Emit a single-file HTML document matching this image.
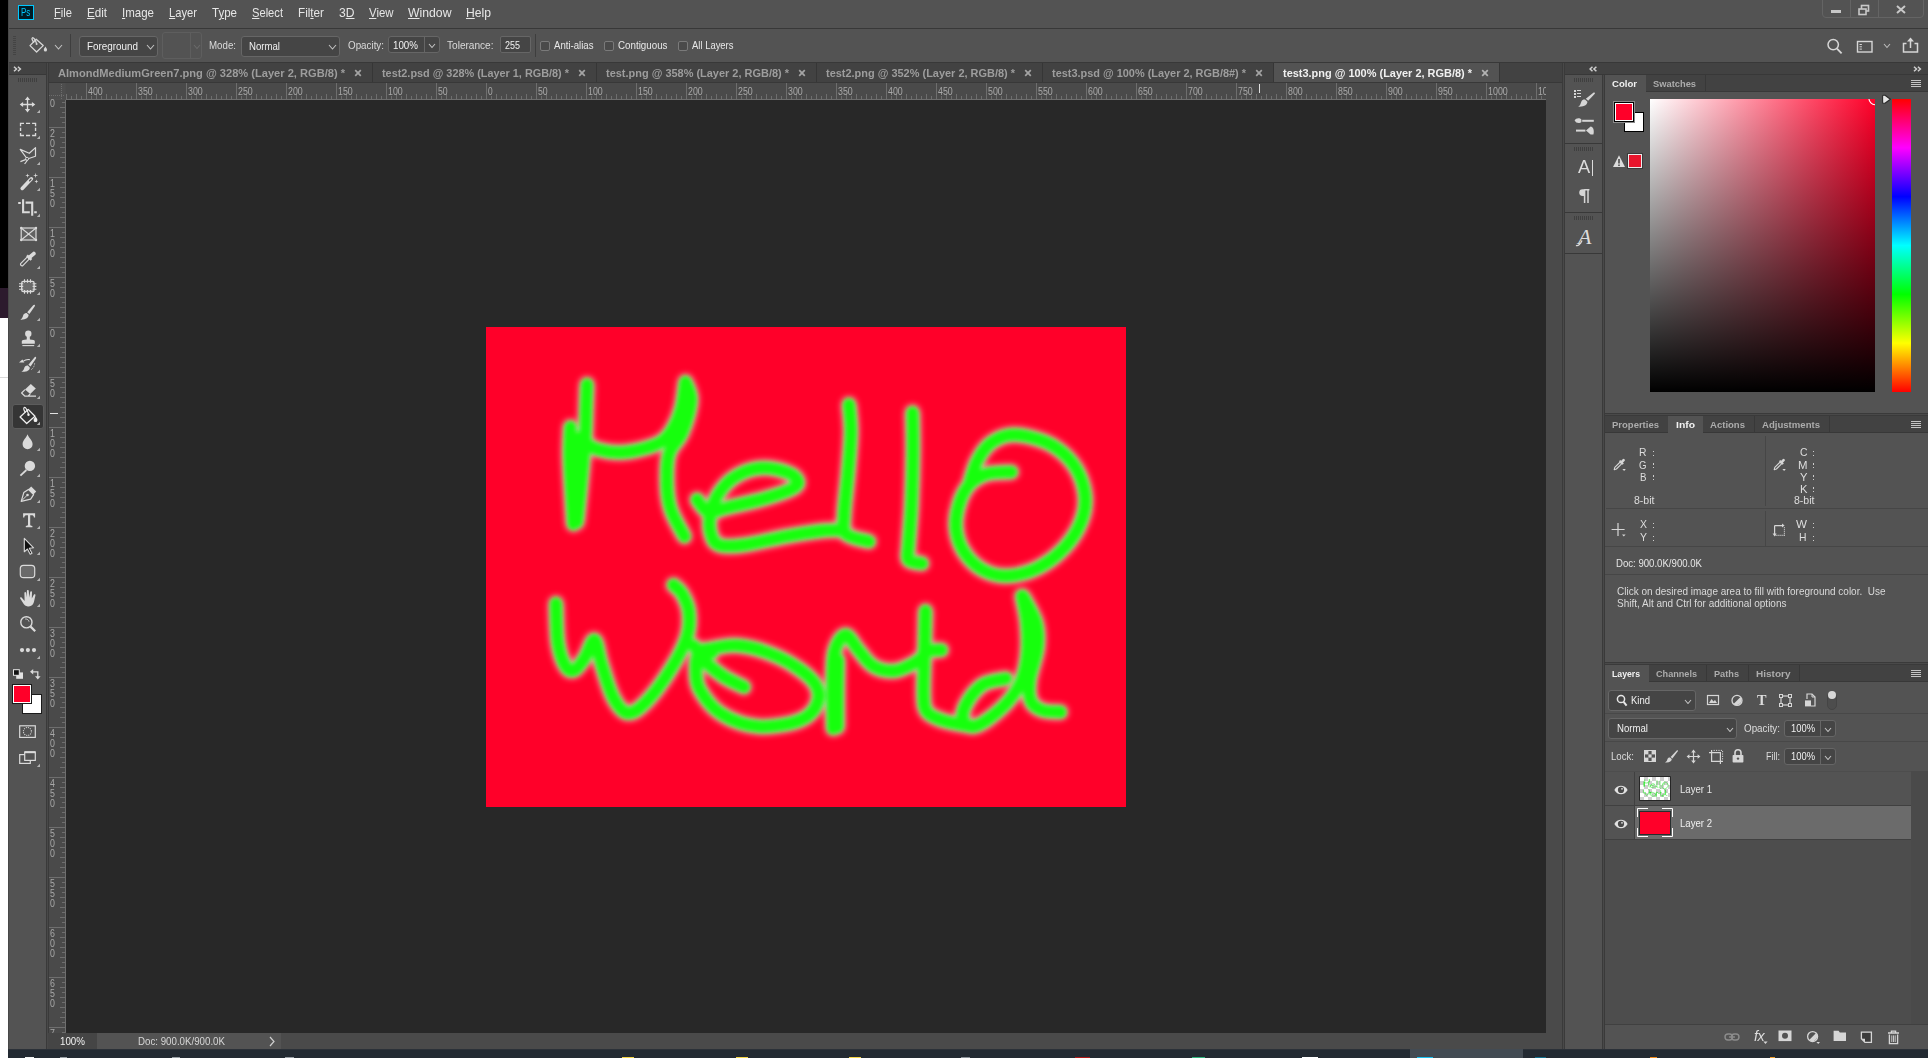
<!DOCTYPE html>
<html><head><meta charset="utf-8"><title>Photoshop</title><style>
html,body{margin:0;padding:0;background:#535353;}
body{width:1928px;height:1058px;position:relative;overflow:hidden;font-family:"Liberation Sans",sans-serif;}
#root{position:absolute;left:0;top:0;width:1928px;height:1058px;overflow:hidden;}
#root div,#root svg,#root span.t{position:absolute;}
span.t{white-space:pre;line-height:1;transform-origin:0 50%;}
u{text-decoration:underline;text-underline-offset:1px;text-decoration-thickness:1px;}
</style></head><body><div id="root">
<div style="left:0px;top:0px;width:8px;height:288px;background:#000000;"></div>
<div style="left:0px;top:288px;width:8px;height:30px;background:#2c1a2d;"></div>
<div style="left:0px;top:318px;width:8px;height:740px;background:#ffffff;"></div>
<div style="left:0px;top:377px;width:8px;height:1px;background:#d9d9d9;"></div>
<div style="left:8px;top:0px;width:1920px;height:1049px;background:#535353;"></div>
<div style="left:8px;top:28px;width:1920px;height:1px;background:#383838;"></div>
<div style="left:8px;top:62px;width:1920px;height:1px;background:#383838;"></div>
<div style="left:8px;top:63px;width:38px;height:11px;background:#424242;"></div>
<div style="left:8px;top:74px;width:38px;height:1px;background:#383838;"></div>
<div style="left:48px;top:63px;width:1514px;height:19px;background:#424242;"></div>
<div style="left:48px;top:82px;width:1514px;height:1px;background:#383838;"></div>
<div style="left:48px;top:83px;width:1498px;height:16px;background:#4a4a4a;"></div>
<div style="left:48px;top:100px;width:17px;height:933px;background:#4a4a4a;"></div>
<div style="left:66px;top:100px;width:1480px;height:933px;background:#282828;"></div>
<div style="left:1546px;top:83px;width:16px;height:966px;background:#4a4a4a;"></div>
<div style="left:48px;top:1033px;width:1514px;height:16px;background:#4a4a4a;"></div>
<div style="left:46px;top:63px;width:3px;height:986px;background:#494949;"></div>
<div style="left:46px;top:63px;width:1px;height:986px;background:#3a3a3a;"></div>
<div style="left:48px;top:63px;width:1px;height:986px;background:#3a3a3a;"></div>
<div style="left:8px;top:0px;width:1px;height:1049px;background:#474747;"></div>
<div style="left:1562px;top:63px;width:3px;height:986px;background:#494949;"></div>
<div style="left:1562px;top:63px;width:1px;height:986px;background:#3a3a3a;"></div>
<div style="left:1564px;top:63px;width:1px;height:986px;background:#3a3a3a;"></div>
<div style="left:1565px;top:63px;width:363px;height:11px;background:#424242;"></div>
<div style="left:1565px;top:74px;width:363px;height:1px;background:#383838;"></div>
<div style="left:1602px;top:75px;width:3px;height:974px;background:#494949;"></div>
<div style="left:1602px;top:75px;width:1px;height:974px;background:#3a3a3a;"></div>
<div style="left:1604px;top:75px;width:1px;height:974px;background:#3a3a3a;"></div>
<div style="left:8px;top:1049px;width:1920px;height:9px;background:#232a32;"></div>
<div style="left:8px;top:1049px;width:1920px;height:1px;background:#2b3138;"></div>
<div style="left:1410px;top:1049px;width:113px;height:9px;background:#434b53;"></div>
<div style="left:25px;top:1057px;width:9px;height:1px;background:#f4f4f4;"></div>
<div style="left:60px;top:1057px;width:7px;height:1px;background:#9aa0a6;"></div>
<div style="left:172px;top:1057px;width:8px;height:1px;background:#9aa0a6;"></div>
<div style="left:285px;top:1057px;width:9px;height:1px;background:#9aa0a6;"></div>
<div style="left:622px;top:1057px;width:12px;height:1px;background:#f5d547;"></div>
<div style="left:736px;top:1057px;width:12px;height:1px;background:#f5d547;"></div>
<div style="left:849px;top:1057px;width:12px;height:1px;background:#f5d547;"></div>
<div style="left:961px;top:1057px;width:9px;height:1px;background:#8a9098;"></div>
<div style="left:1075px;top:1057px;width:15px;height:1px;background:#b01818;"></div>
<div style="left:1192px;top:1057px;width:13px;height:1px;background:#2fb37c;"></div>
<div style="left:1302px;top:1057px;width:16px;height:1px;background:#ffffff;"></div>
<div style="left:1417px;top:1057px;width:16px;height:1px;background:#19c2f2;"></div>
<div style="left:1535px;top:1057px;width:11px;height:1px;background:#126e8c;"></div>
<div style="left:1650px;top:1057px;width:7px;height:1px;background:#f08a1c;"></div>
<div style="left:1770px;top:1057px;width:5px;height:1px;background:#f0a030;"></div>
<div style="left:18px;top:5px;width:16px;height:15px;background:#001c26;border:1px solid #00c8ff;box-sizing:border-box;"></div>
<span class="t" style="left:21.30px;top:7.27px;font-size:11px;color:#00c8ff;transform:scaleX(0.7319);">Ps</span>
<span class="t" style="left:54.00px;top:6.37px;font-size:13px;color:#e6e6e6;transform:scaleX(0.8584);"><u>F</u>ile</span>
<span class="t" style="left:87.00px;top:6.37px;font-size:13px;color:#e6e6e6;transform:scaleX(0.8926);"><u>E</u>dit</span>
<span class="t" style="left:122.00px;top:6.37px;font-size:13px;color:#e6e6e6;transform:scaleX(0.8850);"><u>I</u>mage</span>
<span class="t" style="left:169.00px;top:6.37px;font-size:13px;color:#e6e6e6;transform:scaleX(0.8607);"><u>L</u>ayer</span>
<span class="t" style="left:212.00px;top:6.37px;font-size:13px;color:#e6e6e6;transform:scaleX(0.8864);">T<u>y</u>pe</span>
<span class="t" style="left:252.00px;top:6.37px;font-size:13px;color:#e6e6e6;transform:scaleX(0.8578);"><u>S</u>elect</span>
<span class="t" style="left:298.00px;top:6.37px;font-size:13px;color:#e6e6e6;transform:scaleX(0.8995);">Fil<u>t</u>er</span>
<span class="t" style="left:339.00px;top:6.37px;font-size:13px;color:#e6e6e6;transform:scaleX(0.9323);">3<u>D</u></span>
<span class="t" style="left:369.00px;top:6.37px;font-size:13px;color:#e6e6e6;transform:scaleX(0.8765);"><u>V</u>iew</span>
<span class="t" style="left:408.00px;top:6.37px;font-size:13px;color:#e6e6e6;transform:scaleX(0.9405);"><u>W</u>indow</span>
<span class="t" style="left:466.00px;top:6.37px;font-size:13px;color:#e6e6e6;transform:scaleX(0.9346);"><u>H</u>elp</span>
<div style="left:1822px;top:-2px;width:102px;height:20px;background:transparent;border:1px solid #646464;border-radius:0 0 4px 4px;box-sizing:border-box;"></div>
<div style="left:1850px;top:0px;width:1px;height:18px;background:#646464;"></div>
<div style="left:1878px;top:0px;width:1px;height:18px;background:#646464;"></div>
<div style="left:1831px;top:10px;width:10px;height:3px;background:#c8c8c8;"></div>
<svg style="left:1858px;top:4px;" width="12" height="12" viewBox="0 0 12 12"><rect x="3.5" y="1.5" width="7" height="5.5" fill="none" stroke="#c8c8c8" stroke-width="1.6"/><rect x="1" y="5" width="7" height="5.5" fill="#535353" stroke="#c8c8c8" stroke-width="1.6"/></svg>
<svg style="left:1895px;top:4px;" width="12" height="12" viewBox="0 0 12 12"><path d="M2 2 L10 9 M10 2 L2 9" stroke="#c8c8c8" stroke-width="2" fill="none"/></svg>
<div style="left:13px;top:36px;width:3px;height:1px;background:#444444;"></div>
<div style="left:13px;top:38px;width:3px;height:1px;background:#444444;"></div>
<div style="left:13px;top:40px;width:3px;height:1px;background:#444444;"></div>
<div style="left:13px;top:42px;width:3px;height:1px;background:#444444;"></div>
<div style="left:13px;top:44px;width:3px;height:1px;background:#444444;"></div>
<div style="left:13px;top:46px;width:3px;height:1px;background:#444444;"></div>
<div style="left:13px;top:48px;width:3px;height:1px;background:#444444;"></div>
<div style="left:13px;top:50px;width:3px;height:1px;background:#444444;"></div>
<div style="left:13px;top:52px;width:3px;height:1px;background:#444444;"></div>
<div style="left:13px;top:54px;width:3px;height:1px;background:#444444;"></div>
<svg style="left:28px;top:36px;" width="20" height="18" viewBox="0 0 20 18"><g fill="none" stroke="#d6d6d6" stroke-width="1.3" stroke-linejoin="round"><path d="M8.2 3.2 L15.2 9.6 L8.6 16 L2 9.6 Z"/><path d="M8.6 7.6 C7.2 3.8 5.6 1.4 4.4 1.8 C3.4 2.2 4.2 4.2 6 6.6"/></g><circle cx="8.6" cy="8" r="1" fill="#d6d6d6"/><path d="M17.4 10.6 C18.6 12.4 19 13.2 19 14 A1.6 1.6 0 0 1 15.8 14 C15.8 13.2 16.2 12.4 17.4 10.6 Z" fill="#d6d6d6"/></svg>
<svg style="left:54.0px;top:43.8px;" width="9" height="6" viewBox="0 0 9 6"><path d="M1 1 L4.5 5 L8 1" fill="none" stroke="#c4c4c4" stroke-width="1.05"/></svg>
<div style="left:70px;top:34px;width:1px;height:23px;background:#3e3e3e;"></div>
<div style="left:79px;top:36px;width:78.5px;height:21px;background:#454545;border:1px solid #666;border-radius:3px;box-sizing:border-box;"></div>
<span class="t" style="left:87.00px;top:41.12px;font-size:10.5px;color:#f0f0f0;transform:scaleX(0.9393);">Foreground</span>
<svg style="left:145.5px;top:44.4px;" width="9" height="6" viewBox="0 0 9 6"><path d="M1 1 L4.5 5 L8 1" fill="none" stroke="#c4c4c4" stroke-width="1.05"/></svg>
<div style="left:162px;top:32px;width:40px;height:27px;background:#535353;border:1px solid #5e5e5e;border-radius:3px;box-sizing:border-box;"></div>
<div style="left:190px;top:33px;width:1px;height:25px;background:#5e5e5e;"></div>
<svg style="left:192.5px;top:43.75px;" width="8" height="5.5" viewBox="0 0 8 5.5"><path d="M1 1 L4.0 4.5 L7 1" fill="none" stroke="#6a6a6a" stroke-width="1.05"/></svg>
<span class="t" style="left:209.00px;top:40.32px;font-size:10.5px;color:#dadada;transform:scaleX(0.9251);">Mode:</span>
<div style="left:240.5px;top:36px;width:99px;height:21px;background:#454545;border:1px solid #666;border-radius:3px;box-sizing:border-box;"></div>
<span class="t" style="left:249.00px;top:41.12px;font-size:10.5px;color:#f0f0f0;transform:scaleX(0.9160);">Normal</span>
<svg style="left:327.5px;top:44.4px;" width="9" height="6" viewBox="0 0 9 6"><path d="M1 1 L4.5 5 L8 1" fill="none" stroke="#c4c4c4" stroke-width="1.05"/></svg>
<span class="t" style="left:348.00px;top:40.12px;font-size:10.5px;color:#dadada;transform:scaleX(0.9347);">Opacity:</span>
<div style="left:388px;top:36px;width:52px;height:17px;background:#454545;border:1px solid #666;border-radius:3px;box-sizing:border-box;"></div>
<div style="left:424px;top:37px;width:1px;height:15px;background:#666;"></div>
<span class="t" style="left:393.00px;top:40.12px;font-size:10.5px;color:#f0f0f0;transform:scaleX(0.9308);">100%</span>
<svg style="left:428.0px;top:43.05px;" width="8" height="5.5" viewBox="0 0 8 5.5"><path d="M1 1 L4.0 4.5 L7 1" fill="none" stroke="#c4c4c4" stroke-width="1.05"/></svg>
<span class="t" style="left:447.00px;top:40.12px;font-size:10.5px;color:#dadada;transform:scaleX(0.9597);">Tolerance:</span>
<div style="left:500px;top:36px;width:31px;height:17px;background:#454545;border:1px solid #666;border-radius:2px;box-sizing:border-box;"></div>
<span class="t" style="left:505.00px;top:40.12px;font-size:10.5px;color:#f0f0f0;transform:scaleX(0.8556);">255</span>
<div style="left:535px;top:34px;width:1px;height:23px;background:#3e3e3e;"></div>
<div style="left:539.5px;top:40.5px;width:10px;height:10px;background:#4a4a4a;border:1px solid #7a7a7a;border-radius:2px;box-sizing:border-box;"></div>
<span class="t" style="left:554.00px;top:40.32px;font-size:10.5px;color:#e8e8e8;transform:scaleX(0.9146);">Anti-alias</span>
<div style="left:603.5px;top:40.5px;width:10px;height:10px;background:#4a4a4a;border:1px solid #7a7a7a;border-radius:2px;box-sizing:border-box;"></div>
<span class="t" style="left:618.00px;top:40.32px;font-size:10.5px;color:#e8e8e8;transform:scaleX(0.9318);">Contiguous</span>
<div style="left:677.5px;top:40.5px;width:10px;height:10px;background:#4a4a4a;border:1px solid #7a7a7a;border-radius:2px;box-sizing:border-box;"></div>
<span class="t" style="left:692.00px;top:40.32px;font-size:10.5px;color:#e8e8e8;transform:scaleX(0.9000);">All Layers</span>
<svg style="left:1826px;top:37px;" width="18" height="18" viewBox="0 0 18 18"><circle cx="7.2" cy="7.6" r="5.2" fill="none" stroke="#d6d6d6" stroke-width="1.5"/><path d="M11 11.6 L15.6 16.4" stroke="#d6d6d6" stroke-width="1.8"/></svg>
<svg style="left:1856px;top:40px;" width="18" height="14" viewBox="0 0 18 14"><rect x="1.5" y="1.5" width="14.5" height="10.5" fill="none" stroke="#d6d6d6" stroke-width="1.4"/><path d="M3.5 4.5h2.4M3.5 6.8h2.4M3.5 9.1h2.4" stroke="#d6d6d6" stroke-width="1"/></svg>
<svg style="left:1882.5px;top:43.25px;" width="8" height="5.5" viewBox="0 0 8 5.5"><path d="M1 1 L4.0 4.5 L7 1" fill="none" stroke="#bdbdbd" stroke-width="1.05"/></svg>
<svg style="left:1901px;top:36px;" width="20" height="18" viewBox="0 0 20 18"><path d="M5.5 7.5 H2.5 V16 H16.5 V7.5 H13.5" fill="none" stroke="#d6d6d6" stroke-width="1.5"/><path d="M9.5 12 V3" stroke="#d6d6d6" stroke-width="1.5"/><path d="M6 5.6 L9.5 1.6 L13 5.6 Z" fill="#d6d6d6"/></svg>
<svg style="left:13px;top:65.5px;" width="10" height="6" viewBox="0 0 10 6"><path d="M1 0.7 L3.5 3 L1 5.3 M4.9 0.7 L7.4 3 L4.9 5.3" fill="none" stroke="#d0d0d0" stroke-width="1.5"/></svg>
<div style="left:18px;top:78px;width:1px;height:4px;background:#3f3f3f;"></div>
<div style="left:20px;top:78px;width:1px;height:4px;background:#3f3f3f;"></div>
<div style="left:22px;top:78px;width:1px;height:4px;background:#3f3f3f;"></div>
<div style="left:24px;top:78px;width:1px;height:4px;background:#3f3f3f;"></div>
<div style="left:26px;top:78px;width:1px;height:4px;background:#3f3f3f;"></div>
<div style="left:28px;top:78px;width:1px;height:4px;background:#3f3f3f;"></div>
<div style="left:30px;top:78px;width:1px;height:4px;background:#3f3f3f;"></div>
<div style="left:32px;top:78px;width:1px;height:4px;background:#3f3f3f;"></div>
<div style="left:34px;top:78px;width:1px;height:4px;background:#3f3f3f;"></div>
<div style="left:36px;top:78px;width:1px;height:4px;background:#3f3f3f;"></div>
<div style="left:11.5px;top:403.5px;width:32px;height:25px;background:#353535;border:1px solid #5c5c5c;border-radius:3px;box-sizing:border-box;"></div>
<svg style="left:8px;top:75px" width="38" height="705" viewBox="8 75 38 705"><path d="M27.5 98.6 V110.4 M21.6 104.5 H33.4" stroke="#dadada" stroke-width="1.35" fill="none"/><path d="M27.5 96.6 L30.1 100 H24.9 Z M27.5 112.4 L30.1 109 H24.9 Z M19.7 104.5 L23.1 101.9 V107.1 Z M35.3 104.5 L31.9 101.9 V107.1 Z" fill="#dadada"/><path d="M40 109.8 V113 H36.8 Z" fill="#b4b4b4"/><path d="M20.55 126.2 V123.35 H24 M26 123.35 H30.1 M32.1 123.35 H35.55 V126.2 M35.55 127.7 V131 M35.55 132.9 V135.45 H32.1 M30.1 135.45 H26 M24 135.45 H20.55 V132.9 M20.55 131 V127.7" fill="none" stroke="#dadada" stroke-width="1.35"/><path d="M40 135.8 V139 H36.8 Z" fill="#b4b4b4"/><path d="M20.2 149.4 L29.3 153.3 L35.5 147.6 V156.2 L27.3 159 Z" fill="none" stroke="#dadada" stroke-width="1.2" stroke-linejoin="round"/><path d="M26.2 159.4 L20.4 161.6 M27.6 160 L24.6 164" stroke="#dadada" stroke-width="1.2" fill="none"/><circle cx="27.1" cy="158.8" r="1.5" fill="#535353" stroke="#dadada" stroke-width="1"/><path d="M40 161.8 V165 H36.8 Z" fill="#b4b4b4"/><path d="M22.2 188.4 L31.4 178.8" stroke="#dadada" stroke-width="3.6" stroke-linecap="round"/><path d="M29.6 180.8 L31 179.3" stroke="#535353" stroke-width="1.3" stroke-linecap="round"/><path d="M27.5 173.4 L28.0 175.1 L29.7 175.6 L28.0 176.1 L27.5 177.79999999999998 L27.0 176.1 L25.3 175.6 L27.0 175.1 Z" fill="#dadada"/><path d="M35.6 172.8 L36.1 174.9 L38.2 175.4 L36.1 175.9 L35.6 178.0 L35.1 175.9 L33.0 175.4 L35.1 174.9 Z" fill="#dadada"/><path d="M36.4 179.6 L36.9 181.1 L38.4 181.6 L36.9 182.1 L36.4 183.6 L35.9 182.1 L34.4 181.6 L35.9 181.1 Z" fill="#dadada"/><path d="M40 187.8 V191 H36.8 Z" fill="#b4b4b4"/><path d="M23.1 199.2 V212.2 H29.8 M25.6 202.6 H32.2 V215.8 M18.2 203 H20.8 M34.2 212.2 H36.8" stroke="#dadada" stroke-width="2.1" fill="none"/><path d="M40 213.8 V217 H36.8 Z" fill="#b4b4b4"/><rect x="21.2" y="228" width="14.8" height="12" fill="#626262" stroke="#dadada" stroke-width="1.2"/><path d="M21.2 228 L36 240 M36 228 L21.2 240" stroke="#dadada" stroke-width="1.1"/><circle cx="21.2" cy="228" r="1.2" fill="#dadada"/><circle cx="36" cy="228" r="1.2" fill="#dadada"/><circle cx="21.2" cy="240" r="1.2" fill="#dadada"/><circle cx="36" cy="240" r="1.2" fill="#dadada"/><path d="M29.6 258.6 L22.6 265.8 A1.7 1.7 0 0 1 20.6 263.6 L27.6 256.6" fill="none" stroke="#dadada" stroke-width="1.2" stroke-linejoin="round"/><path d="M27 255.4 L31.4 259.8" stroke="#dadada" stroke-width="2.4"/><path d="M29.4 257.4 L33.8 253.6" stroke="#dadada" stroke-width="3.8" stroke-linecap="round"/><path d="M40 265.8 V269 H36.8 Z" fill="#b4b4b4"/><rect x="21.7" y="281.3" width="12.4" height="10.2" rx="1.6" fill="#6a6a6a" stroke="#dadada" stroke-width="1.3"/><path d="M24.5 279.2 V282.8 M27.5 279.2 V282.8 M30.5 279.2 V282.8 M24.5 290 V293.8 M27.5 290 V293.8 M30.5 290 V293.8 M19 283.8 H23.2 M19 286.4 H23.2 M19 289.2 H23.2 M32.6 283.8 H36.4 M32.6 286.4 H36.4 M32.6 289.2 H36.4" stroke="#dadada" stroke-width="1.1"/><path d="M40 291.8 V295 H36.8 Z" fill="#b4b4b4"/><path d="M34.6 304.8 C35.2 305.4 35 306 34.6 306.6 L29.4 314 L27.2 312.2 L33.2 305.2 C33.6 304.8 34.2 304.4 34.6 304.8 Z" fill="#dadada"/><path d="M26.6 313 L28.6 314.8 C28.8 317.6 25.6 320 20.2 319.6 C22.6 318.4 22.6 316.8 23.2 315.2 C23.8 313.6 25.4 312.6 26.6 313 Z" fill="#dadada"/><path d="M40 317.8 V321 H36.8 Z" fill="#b4b4b4"/><circle cx="28.3" cy="333.7" r="3.2" fill="#dadada"/><path d="M26.9 335.6 H29.7 L29.9 339.4 C33 339.6 34.8 340 34.8 341 V343.8 H21.8 V341 C21.8 340 23.6 339.6 26.7 339.4 Z" fill="#dadada"/><path d="M22.4 345.6 H34.2" stroke="#dadada" stroke-width="1.1"/><path d="M40 343.8 V347 H36.8 Z" fill="#b4b4b4"/><path d="M35.8 357 C36.4 357.6 36.2 358.2 35.8 358.8 L30.6 366.6 L28.4 364.8 L34.4 357.4 C34.8 357 35.4 356.6 35.8 357 Z" fill="#dadada"/><path d="M27.8 365.6 L29.8 367.4 C30 370 27 372.2 21.4 371.8 C23.8 370.6 23.8 369.2 24.4 367.6 C25 366.2 26.6 365.2 27.8 365.6 Z" fill="#dadada"/><path d="M29.8 359.6 C27 359.2 25 359.8 23.4 361.2" fill="none" stroke="#dadada" stroke-width="1.1"/><path d="M19 362.6 L22.4 359.4 L24.4 362.6 Z" fill="#dadada"/><path d="M34.6 363.4 C34.4 366.4 33 368.6 31 369.8" fill="none" stroke="#dadada" stroke-width="1" stroke-dasharray="1 1.3"/><path d="M40 369.8 V373 H36.8 Z" fill="#b4b4b4"/><path d="M30.8 384 L35.8 388.4 L30.2 394 L25 389.6 Z" fill="#dadada"/><path d="M25 389.6 L21.6 393 L25 396.2 H28 L30.2 394 M28 396.2 H36" fill="none" stroke="#dadada" stroke-width="1.2" stroke-linejoin="round"/><path d="M40 395.8 V399 H36.8 Z" fill="#b4b4b4"/><path d="M28.2 409.4 L35 416.2 L26.7 423.5 L20.1 417 Z" fill="none" stroke="#f0f0f0" stroke-width="1.3" stroke-linejoin="round"/><path d="M28.5 414.4 C27.6 410.6 25.6 406.8 24.2 407.6 C23.2 408.2 24 410.6 25.4 412.4" fill="none" stroke="#f0f0f0" stroke-width="1.2"/><circle cx="28.5" cy="414.7" r="1.2" fill="#f0f0f0"/><path d="M35.6 416.6 C36.8 418.4 37.4 419.2 37.4 420.2 A1.9 1.9 0 0 1 33.6 420.2 C33.6 419.2 34.4 418.4 35.6 416.6 Z" fill="#f0f0f0"/><path d="M40 421.8 V425 H36.8 Z" fill="#b4b4b4"/><path d="M27.5 434.2 C28.6 437.6 32.6 440.4 32.6 444.2 A5 5 0 0 1 22.6 444.2 C22.6 440.4 26.4 437.6 27.5 434.2 Z" fill="#dadada"/><path d="M40 447.8 V451 H36.8 Z" fill="#b4b4b4"/><circle cx="29.9" cy="465.9" r="5.2" fill="#dadada"/><path d="M26.4 470 L20.4 475.6" stroke="#dadada" stroke-width="1.8"/><path d="M40 473.8 V477 H36.8 Z" fill="#b4b4b4"/><path d="M21.2 501.4 L23.8 492.6 L28.4 489.4 L33.6 494.6 L30.6 499.2 Z" fill="none" stroke="#dadada" stroke-width="1.2" stroke-linejoin="round"/><path d="M28.2 489.6 L31.2 486.6 L36.2 491.4 L33.4 494.6 Z" fill="#dadada"/><path d="M21.4 501 L27 495.4" stroke="#dadada" stroke-width="1"/><circle cx="27.5" cy="495" r="1.3" fill="#dadada"/><path d="M40 499.8 V503 H36.8 Z" fill="#b4b4b4"/><path d="M23.1 513.3 H35.1 V517.4 H33.9 C33.7 515.8 33 515.3 31.4 515.3 H30.2 V524.6 C30.2 525.6 30.8 525.9 32.4 526 V527.3 H25.8 V526 C27.4 525.9 28 525.6 28 524.6 V515.3 H26.8 C25.2 515.3 24.5 515.8 24.3 517.4 H23.1 Z" fill="#dadada"/><path d="M40 525.8 V529 H36.8 Z" fill="#b4b4b4"/><path d="M24.3 538.4 V551.8 L27.4 549 L30.2 554.2 L32 553.2 L29.3 548.2 L33.6 547.8 Z" fill="#111" stroke="#dadada" stroke-width="1.1" stroke-linejoin="round"/><path d="M40 551.8 V555 H36.8 Z" fill="#b4b4b4"/><rect x="20.3" y="565.3" width="14.4" height="12.4" rx="3.2" fill="#6a6a6a" stroke="#dadada" stroke-width="1.2"/><path d="M40 577.8 V581 H36.8 Z" fill="#b4b4b4"/><path d="M24.6 601 L24.4 593 C24.4 591.8 26 591.8 26.1 593 L26.6 597.6 L26.9 591 C26.9 589.6 28.7 589.6 28.8 591 L29.2 597.4 L30.2 592 C30.4 590.8 32 591 32 592.2 L31.8 598.4 L33.8 594.8 C34.4 593.8 35.8 594.4 35.4 595.6 C34.6 598.4 34.4 601.6 33.2 603.8 C32 606 29.8 606.6 27.8 606.4 C25.6 606.2 24.4 605 23.2 603.2 L20.2 598.6 C19.6 597.6 20.8 596.8 21.6 597.6 Z" fill="#dadada"/><path d="M40 603.8 V607 H36.8 Z" fill="#b4b4b4"/><circle cx="26.4" cy="622.3" r="5.6" fill="none" stroke="#dadada" stroke-width="1.4"/><path d="M30.6 626.6 L35.2 631.2" stroke="#dadada" stroke-width="2.2"/><path d="M25.2 619 C27.2 618.8 28.6 620 29 621.6" fill="none" stroke="#dadada" stroke-width="0.9"/><circle cx="22" cy="650.1" r="2.1" fill="#dadada"/><circle cx="27.9" cy="650.1" r="2.1" fill="#dadada"/><circle cx="34" cy="650.1" r="2.1" fill="#dadada"/><path d="M40 655.8 V659 H36.8 Z" fill="#b4b4b4"/><rect x="16.2" y="672.4" width="6.8" height="6.4" fill="#e2e2e2"/><rect x="13.5" y="669.7" width="5.8" height="5.6" fill="#111" stroke="#e6e6e6" stroke-width="1"/><path d="M32 671.8 H37.8 V677" fill="none" stroke="#dadada" stroke-width="1.3"/><path d="M30 671.8 L33.2 669 V674.6 Z M37.8 679.4 L35 676.2 H40.6 Z" fill="#dadada"/><rect x="19.7" y="725.8" width="15.6" height="11.6" fill="none" stroke="#dadada" stroke-width="1.2"/><circle cx="27.4" cy="731.5" r="4" fill="none" stroke="#dadada" stroke-width="1.1" stroke-dasharray="1 1.1"/><rect x="19.7" y="754.6" width="10.6" height="8.8" fill="none" stroke="#dadada" stroke-width="1.2"/><rect x="24.7" y="752" width="10.6" height="8.4" fill="#535353" stroke="#dadada" stroke-width="1.2"/><path d="M24.7 752.2 H35.3" stroke="#dadada" stroke-width="2"/><path d="M40 763.8 V767 H36.8 Z" fill="#b4b4b4"/></svg>
<div style="left:22px;top:694px;width:20px;height:20px;background:#ffffff;border:1px solid #1a1a1a;box-sizing:border-box;"></div>
<div style="left:12px;top:684px;width:20px;height:20px;background:#ff0029;border:1px solid #fff;outline:1px solid #1a1a1a;outline-offset:-1px;box-sizing:border-box;"></div>
<div style="left:12px;top:684px;width:20px;height:20px;background:transparent;border:1px solid #1a1a1a;box-sizing:border-box;"></div>
<div style="left:13px;top:685px;width:18px;height:18px;background:#ff0029;border:1px solid #fff;box-sizing:border-box;"></div>
<div style="left:372px;top:63px;width:1px;height:19px;background:#363636;"></div>
<span class="t" style="left:58.00px;top:67.67px;font-size:11px;color:#9d9d9d;font-weight:bold;transform:scaleX(1.0085);">AlmondMediumGreen7.png @ 328% (Layer 2, RGB/8) *</span>
<svg style="left:354px;top:69px;" width="8" height="8" viewBox="0 0 8 8"><path d="M1.2 1.2 L6.8 6.8 M6.8 1.2 L1.2 6.8" stroke="#a4a4a4" stroke-width="1.7" fill="none"/></svg>
<div style="left:596px;top:63px;width:1px;height:19px;background:#363636;"></div>
<span class="t" style="left:382.00px;top:67.67px;font-size:11px;color:#9d9d9d;font-weight:bold;transform:scaleX(0.9881);">test2.psd @ 328% (Layer 1, RGB/8) *</span>
<svg style="left:578px;top:69px;" width="8" height="8" viewBox="0 0 8 8"><path d="M1.2 1.2 L6.8 6.8 M6.8 1.2 L1.2 6.8" stroke="#a4a4a4" stroke-width="1.7" fill="none"/></svg>
<div style="left:816px;top:63px;width:1px;height:19px;background:#363636;"></div>
<span class="t" style="left:606.00px;top:67.67px;font-size:11px;color:#9d9d9d;font-weight:bold;transform:scaleX(0.9960);">test.png @ 358% (Layer 2, RGB/8) *</span>
<svg style="left:798px;top:69px;" width="8" height="8" viewBox="0 0 8 8"><path d="M1.2 1.2 L6.8 6.8 M6.8 1.2 L1.2 6.8" stroke="#a4a4a4" stroke-width="1.7" fill="none"/></svg>
<div style="left:1042px;top:63px;width:1px;height:19px;background:#363636;"></div>
<span class="t" style="left:826.00px;top:67.67px;font-size:11px;color:#9d9d9d;font-weight:bold;transform:scaleX(0.9956);">test2.png @ 352% (Layer 2, RGB/8) *</span>
<svg style="left:1024px;top:69px;" width="8" height="8" viewBox="0 0 8 8"><path d="M1.2 1.2 L6.8 6.8 M6.8 1.2 L1.2 6.8" stroke="#a4a4a4" stroke-width="1.7" fill="none"/></svg>
<div style="left:1273px;top:63px;width:1px;height:19px;background:#363636;"></div>
<span class="t" style="left:1052.00px;top:67.67px;font-size:11px;color:#9d9d9d;font-weight:bold;transform:scaleX(0.9930);">test3.psd @ 100% (Layer 2, RGB/8#) *</span>
<svg style="left:1255px;top:69px;" width="8" height="8" viewBox="0 0 8 8"><path d="M1.2 1.2 L6.8 6.8 M6.8 1.2 L1.2 6.8" stroke="#a4a4a4" stroke-width="1.7" fill="none"/></svg>
<div style="left:1274px;top:63px;width:225px;height:19px;background:#535353;"></div>
<span class="t" style="left:1283.00px;top:67.67px;font-size:11px;color:#f0f0f0;font-weight:bold;transform:scaleX(0.9956);">test3.png @ 100% (Layer 2, RGB/8) *</span>
<svg style="left:1481px;top:69px;" width="8" height="8" viewBox="0 0 8 8"><path d="M1.2 1.2 L6.8 6.8 M6.8 1.2 L1.2 6.8" stroke="#b4b4b4" stroke-width="1.7" fill="none"/></svg>
<div style="left:1499px;top:63px;width:1px;height:19px;background:#363636;"></div>
<svg style="left:48px;top:83px" width="1498" height="17" viewBox="48 83 1498 17"><g stroke="#6e6e6e" stroke-width="1" shape-rendering="crispEdges"><path d="M66.5 94V99"/><path d="M71.5 96V99"/><path d="M76.5 94V99"/><path d="M81.5 96V99"/><path d="M86.5 83V99"/><path d="M91.5 96V99"/><path d="M96.5 94V99"/><path d="M101.5 96V99"/><path d="M106.5 94V99"/><path d="M111.5 96V99"/><path d="M116.5 94V99"/><path d="M121.5 96V99"/><path d="M126.5 94V99"/><path d="M131.5 96V99"/><path d="M136.5 83V99"/><path d="M141.5 96V99"/><path d="M146.5 94V99"/><path d="M151.5 96V99"/><path d="M156.5 94V99"/><path d="M161.5 96V99"/><path d="M166.5 94V99"/><path d="M171.5 96V99"/><path d="M176.5 94V99"/><path d="M181.5 96V99"/><path d="M186.5 83V99"/><path d="M191.5 96V99"/><path d="M196.5 94V99"/><path d="M201.5 96V99"/><path d="M206.5 94V99"/><path d="M211.5 96V99"/><path d="M216.5 94V99"/><path d="M221.5 96V99"/><path d="M226.5 94V99"/><path d="M231.5 96V99"/><path d="M236.5 83V99"/><path d="M241.5 96V99"/><path d="M246.5 94V99"/><path d="M251.5 96V99"/><path d="M256.5 94V99"/><path d="M261.5 96V99"/><path d="M266.5 94V99"/><path d="M271.5 96V99"/><path d="M276.5 94V99"/><path d="M281.5 96V99"/><path d="M286.5 83V99"/><path d="M291.5 96V99"/><path d="M296.5 94V99"/><path d="M301.5 96V99"/><path d="M306.5 94V99"/><path d="M311.5 96V99"/><path d="M316.5 94V99"/><path d="M321.5 96V99"/><path d="M326.5 94V99"/><path d="M331.5 96V99"/><path d="M336.5 83V99"/><path d="M341.5 96V99"/><path d="M346.5 94V99"/><path d="M351.5 96V99"/><path d="M356.5 94V99"/><path d="M361.5 96V99"/><path d="M366.5 94V99"/><path d="M371.5 96V99"/><path d="M376.5 94V99"/><path d="M381.5 96V99"/><path d="M386.5 83V99"/><path d="M391.5 96V99"/><path d="M396.5 94V99"/><path d="M401.5 96V99"/><path d="M406.5 94V99"/><path d="M411.5 96V99"/><path d="M416.5 94V99"/><path d="M421.5 96V99"/><path d="M426.5 94V99"/><path d="M431.5 96V99"/><path d="M436.5 83V99"/><path d="M441.5 96V99"/><path d="M446.5 94V99"/><path d="M451.5 96V99"/><path d="M456.5 94V99"/><path d="M461.5 96V99"/><path d="M466.5 94V99"/><path d="M471.5 96V99"/><path d="M476.5 94V99"/><path d="M481.5 96V99"/><path d="M486.5 83V99"/><path d="M491.5 96V99"/><path d="M496.5 94V99"/><path d="M501.5 96V99"/><path d="M506.5 94V99"/><path d="M511.5 96V99"/><path d="M516.5 94V99"/><path d="M521.5 96V99"/><path d="M526.5 94V99"/><path d="M531.5 96V99"/><path d="M536.5 83V99"/><path d="M541.5 96V99"/><path d="M546.5 94V99"/><path d="M551.5 96V99"/><path d="M556.5 94V99"/><path d="M561.5 96V99"/><path d="M566.5 94V99"/><path d="M571.5 96V99"/><path d="M576.5 94V99"/><path d="M581.5 96V99"/><path d="M586.5 83V99"/><path d="M591.5 96V99"/><path d="M596.5 94V99"/><path d="M601.5 96V99"/><path d="M606.5 94V99"/><path d="M611.5 96V99"/><path d="M616.5 94V99"/><path d="M621.5 96V99"/><path d="M626.5 94V99"/><path d="M631.5 96V99"/><path d="M636.5 83V99"/><path d="M641.5 96V99"/><path d="M646.5 94V99"/><path d="M651.5 96V99"/><path d="M656.5 94V99"/><path d="M661.5 96V99"/><path d="M666.5 94V99"/><path d="M671.5 96V99"/><path d="M676.5 94V99"/><path d="M681.5 96V99"/><path d="M686.5 83V99"/><path d="M691.5 96V99"/><path d="M696.5 94V99"/><path d="M701.5 96V99"/><path d="M706.5 94V99"/><path d="M711.5 96V99"/><path d="M716.5 94V99"/><path d="M721.5 96V99"/><path d="M726.5 94V99"/><path d="M731.5 96V99"/><path d="M736.5 83V99"/><path d="M741.5 96V99"/><path d="M746.5 94V99"/><path d="M751.5 96V99"/><path d="M756.5 94V99"/><path d="M761.5 96V99"/><path d="M766.5 94V99"/><path d="M771.5 96V99"/><path d="M776.5 94V99"/><path d="M781.5 96V99"/><path d="M786.5 83V99"/><path d="M791.5 96V99"/><path d="M796.5 94V99"/><path d="M801.5 96V99"/><path d="M806.5 94V99"/><path d="M811.5 96V99"/><path d="M816.5 94V99"/><path d="M821.5 96V99"/><path d="M826.5 94V99"/><path d="M831.5 96V99"/><path d="M836.5 83V99"/><path d="M841.5 96V99"/><path d="M846.5 94V99"/><path d="M851.5 96V99"/><path d="M856.5 94V99"/><path d="M861.5 96V99"/><path d="M866.5 94V99"/><path d="M871.5 96V99"/><path d="M876.5 94V99"/><path d="M881.5 96V99"/><path d="M886.5 83V99"/><path d="M891.5 96V99"/><path d="M896.5 94V99"/><path d="M901.5 96V99"/><path d="M906.5 94V99"/><path d="M911.5 96V99"/><path d="M916.5 94V99"/><path d="M921.5 96V99"/><path d="M926.5 94V99"/><path d="M931.5 96V99"/><path d="M936.5 83V99"/><path d="M941.5 96V99"/><path d="M946.5 94V99"/><path d="M951.5 96V99"/><path d="M956.5 94V99"/><path d="M961.5 96V99"/><path d="M966.5 94V99"/><path d="M971.5 96V99"/><path d="M976.5 94V99"/><path d="M981.5 96V99"/><path d="M986.5 83V99"/><path d="M991.5 96V99"/><path d="M996.5 94V99"/><path d="M1001.5 96V99"/><path d="M1006.5 94V99"/><path d="M1011.5 96V99"/><path d="M1016.5 94V99"/><path d="M1021.5 96V99"/><path d="M1026.5 94V99"/><path d="M1031.5 96V99"/><path d="M1036.5 83V99"/><path d="M1041.5 96V99"/><path d="M1046.5 94V99"/><path d="M1051.5 96V99"/><path d="M1056.5 94V99"/><path d="M1061.5 96V99"/><path d="M1066.5 94V99"/><path d="M1071.5 96V99"/><path d="M1076.5 94V99"/><path d="M1081.5 96V99"/><path d="M1086.5 83V99"/><path d="M1091.5 96V99"/><path d="M1096.5 94V99"/><path d="M1101.5 96V99"/><path d="M1106.5 94V99"/><path d="M1111.5 96V99"/><path d="M1116.5 94V99"/><path d="M1121.5 96V99"/><path d="M1126.5 94V99"/><path d="M1131.5 96V99"/><path d="M1136.5 83V99"/><path d="M1141.5 96V99"/><path d="M1146.5 94V99"/><path d="M1151.5 96V99"/><path d="M1156.5 94V99"/><path d="M1161.5 96V99"/><path d="M1166.5 94V99"/><path d="M1171.5 96V99"/><path d="M1176.5 94V99"/><path d="M1181.5 96V99"/><path d="M1186.5 83V99"/><path d="M1191.5 96V99"/><path d="M1196.5 94V99"/><path d="M1201.5 96V99"/><path d="M1206.5 94V99"/><path d="M1211.5 96V99"/><path d="M1216.5 94V99"/><path d="M1221.5 96V99"/><path d="M1226.5 94V99"/><path d="M1231.5 96V99"/><path d="M1236.5 83V99"/><path d="M1241.5 96V99"/><path d="M1246.5 94V99"/><path d="M1251.5 96V99"/><path d="M1256.5 94V99"/><path d="M1261.5 96V99"/><path d="M1266.5 94V99"/><path d="M1271.5 96V99"/><path d="M1276.5 94V99"/><path d="M1281.5 96V99"/><path d="M1286.5 83V99"/><path d="M1291.5 96V99"/><path d="M1296.5 94V99"/><path d="M1301.5 96V99"/><path d="M1306.5 94V99"/><path d="M1311.5 96V99"/><path d="M1316.5 94V99"/><path d="M1321.5 96V99"/><path d="M1326.5 94V99"/><path d="M1331.5 96V99"/><path d="M1336.5 83V99"/><path d="M1341.5 96V99"/><path d="M1346.5 94V99"/><path d="M1351.5 96V99"/><path d="M1356.5 94V99"/><path d="M1361.5 96V99"/><path d="M1366.5 94V99"/><path d="M1371.5 96V99"/><path d="M1376.5 94V99"/><path d="M1381.5 96V99"/><path d="M1386.5 83V99"/><path d="M1391.5 96V99"/><path d="M1396.5 94V99"/><path d="M1401.5 96V99"/><path d="M1406.5 94V99"/><path d="M1411.5 96V99"/><path d="M1416.5 94V99"/><path d="M1421.5 96V99"/><path d="M1426.5 94V99"/><path d="M1431.5 96V99"/><path d="M1436.5 83V99"/><path d="M1441.5 96V99"/><path d="M1446.5 94V99"/><path d="M1451.5 96V99"/><path d="M1456.5 94V99"/><path d="M1461.5 96V99"/><path d="M1466.5 94V99"/><path d="M1471.5 96V99"/><path d="M1476.5 94V99"/><path d="M1481.5 96V99"/><path d="M1486.5 83V99"/><path d="M1491.5 96V99"/><path d="M1496.5 94V99"/><path d="M1501.5 96V99"/><path d="M1506.5 94V99"/><path d="M1511.5 96V99"/><path d="M1516.5 94V99"/><path d="M1521.5 96V99"/><path d="M1526.5 94V99"/><path d="M1531.5 96V99"/><path d="M1536.5 83V99"/><path d="M1541.5 96V99"/></g><rect x="49" y="83" width="16.5" height="16.5" fill="#4e4e4e"/><path d="M49 95.5H65M61.5 84V99" stroke="#6c6c6c" stroke-width="1" stroke-dasharray="1 1" fill="none" shape-rendering="crispEdges"/><path d="M66 99.5H1546" stroke="#6e6e6e" stroke-width="1" shape-rendering="crispEdges"/><path d="M1259.5 84V93" stroke="#e0e0e0" stroke-width="1"/></svg>
<span class="t" style="left:88.20px;top:86.97px;font-size:10px;color:#a8a8a8;transform:scaleX(0.8839);">400</span>
<span class="t" style="left:138.20px;top:86.97px;font-size:10px;color:#a8a8a8;transform:scaleX(0.8839);">350</span>
<span class="t" style="left:188.20px;top:86.97px;font-size:10px;color:#a8a8a8;transform:scaleX(0.8839);">300</span>
<span class="t" style="left:238.20px;top:86.97px;font-size:10px;color:#a8a8a8;transform:scaleX(0.8839);">250</span>
<span class="t" style="left:288.20px;top:86.97px;font-size:10px;color:#a8a8a8;transform:scaleX(0.8839);">200</span>
<span class="t" style="left:338.20px;top:86.97px;font-size:10px;color:#a8a8a8;transform:scaleX(0.8839);">150</span>
<span class="t" style="left:388.20px;top:86.97px;font-size:10px;color:#a8a8a8;transform:scaleX(0.8839);">100</span>
<span class="t" style="left:438.20px;top:86.97px;font-size:10px;color:#a8a8a8;transform:scaleX(0.8719);">50</span>
<span class="t" style="left:488.20px;top:86.97px;font-size:10px;color:#a8a8a8;transform:scaleX(0.8360);">0</span>
<span class="t" style="left:538.20px;top:86.97px;font-size:10px;color:#a8a8a8;transform:scaleX(0.8719);">50</span>
<span class="t" style="left:588.20px;top:86.97px;font-size:10px;color:#a8a8a8;transform:scaleX(0.8839);">100</span>
<span class="t" style="left:638.20px;top:86.97px;font-size:10px;color:#a8a8a8;transform:scaleX(0.8839);">150</span>
<span class="t" style="left:688.20px;top:86.97px;font-size:10px;color:#a8a8a8;transform:scaleX(0.8839);">200</span>
<span class="t" style="left:738.20px;top:86.97px;font-size:10px;color:#a8a8a8;transform:scaleX(0.8839);">250</span>
<span class="t" style="left:788.20px;top:86.97px;font-size:10px;color:#a8a8a8;transform:scaleX(0.8839);">300</span>
<span class="t" style="left:838.20px;top:86.97px;font-size:10px;color:#a8a8a8;transform:scaleX(0.8839);">350</span>
<span class="t" style="left:888.20px;top:86.97px;font-size:10px;color:#a8a8a8;transform:scaleX(0.8839);">400</span>
<span class="t" style="left:938.20px;top:86.97px;font-size:10px;color:#a8a8a8;transform:scaleX(0.8839);">450</span>
<span class="t" style="left:988.20px;top:86.97px;font-size:10px;color:#a8a8a8;transform:scaleX(0.8839);">500</span>
<span class="t" style="left:1038.20px;top:86.97px;font-size:10px;color:#a8a8a8;transform:scaleX(0.8839);">550</span>
<span class="t" style="left:1088.20px;top:86.97px;font-size:10px;color:#a8a8a8;transform:scaleX(0.8839);">600</span>
<span class="t" style="left:1138.20px;top:86.97px;font-size:10px;color:#a8a8a8;transform:scaleX(0.8839);">650</span>
<span class="t" style="left:1188.20px;top:86.97px;font-size:10px;color:#a8a8a8;transform:scaleX(0.8839);">700</span>
<span class="t" style="left:1238.20px;top:86.97px;font-size:10px;color:#a8a8a8;transform:scaleX(0.8839);">750</span>
<span class="t" style="left:1288.20px;top:86.97px;font-size:10px;color:#a8a8a8;transform:scaleX(0.8839);">800</span>
<span class="t" style="left:1338.20px;top:86.97px;font-size:10px;color:#a8a8a8;transform:scaleX(0.8839);">850</span>
<span class="t" style="left:1388.20px;top:86.97px;font-size:10px;color:#a8a8a8;transform:scaleX(0.8839);">900</span>
<span class="t" style="left:1438.20px;top:86.97px;font-size:10px;color:#a8a8a8;transform:scaleX(0.8839);">950</span>
<span class="t" style="left:1488.20px;top:86.97px;font-size:10px;color:#a8a8a8;transform:scaleX(0.8899);">1000</span>
<span class="t" style="left:1538.20px;top:86.97px;font-size:10px;color:#a8a8a8;transform:scaleX(0.8719);">10</span>
<div style="left:1546px;top:83px;width:16px;height:17px;background:#4a4a4a;"></div>
<svg style="left:48px;top:100px" width="18" height="933" viewBox="48 100 18 933"><g stroke="#6e6e6e" stroke-width="1" shape-rendering="crispEdges"><path d="M62 102.5H65"/><path d="M60 107.5H65"/><path d="M62 112.5H65"/><path d="M60 117.5H65"/><path d="M62 122.5H65"/><path d="M49 127.5H65"/><path d="M62 132.5H65"/><path d="M60 137.5H65"/><path d="M62 142.5H65"/><path d="M60 147.5H65"/><path d="M62 152.5H65"/><path d="M60 157.5H65"/><path d="M62 162.5H65"/><path d="M60 167.5H65"/><path d="M62 172.5H65"/><path d="M49 177.5H65"/><path d="M62 182.5H65"/><path d="M60 187.5H65"/><path d="M62 192.5H65"/><path d="M60 197.5H65"/><path d="M62 202.5H65"/><path d="M60 207.5H65"/><path d="M62 212.5H65"/><path d="M60 217.5H65"/><path d="M62 222.5H65"/><path d="M49 227.5H65"/><path d="M62 232.5H65"/><path d="M60 237.5H65"/><path d="M62 242.5H65"/><path d="M60 247.5H65"/><path d="M62 252.5H65"/><path d="M60 257.5H65"/><path d="M62 262.5H65"/><path d="M60 267.5H65"/><path d="M62 272.5H65"/><path d="M49 277.5H65"/><path d="M62 282.5H65"/><path d="M60 287.5H65"/><path d="M62 292.5H65"/><path d="M60 297.5H65"/><path d="M62 302.5H65"/><path d="M60 307.5H65"/><path d="M62 312.5H65"/><path d="M60 317.5H65"/><path d="M62 322.5H65"/><path d="M49 327.5H65"/><path d="M62 332.5H65"/><path d="M60 337.5H65"/><path d="M62 342.5H65"/><path d="M60 347.5H65"/><path d="M62 352.5H65"/><path d="M60 357.5H65"/><path d="M62 362.5H65"/><path d="M60 367.5H65"/><path d="M62 372.5H65"/><path d="M49 377.5H65"/><path d="M62 382.5H65"/><path d="M60 387.5H65"/><path d="M62 392.5H65"/><path d="M60 397.5H65"/><path d="M62 402.5H65"/><path d="M60 407.5H65"/><path d="M62 412.5H65"/><path d="M60 417.5H65"/><path d="M62 422.5H65"/><path d="M49 427.5H65"/><path d="M62 432.5H65"/><path d="M60 437.5H65"/><path d="M62 442.5H65"/><path d="M60 447.5H65"/><path d="M62 452.5H65"/><path d="M60 457.5H65"/><path d="M62 462.5H65"/><path d="M60 467.5H65"/><path d="M62 472.5H65"/><path d="M49 477.5H65"/><path d="M62 482.5H65"/><path d="M60 487.5H65"/><path d="M62 492.5H65"/><path d="M60 497.5H65"/><path d="M62 502.5H65"/><path d="M60 507.5H65"/><path d="M62 512.5H65"/><path d="M60 517.5H65"/><path d="M62 522.5H65"/><path d="M49 527.5H65"/><path d="M62 532.5H65"/><path d="M60 537.5H65"/><path d="M62 542.5H65"/><path d="M60 547.5H65"/><path d="M62 552.5H65"/><path d="M60 557.5H65"/><path d="M62 562.5H65"/><path d="M60 567.5H65"/><path d="M62 572.5H65"/><path d="M49 577.5H65"/><path d="M62 582.5H65"/><path d="M60 587.5H65"/><path d="M62 592.5H65"/><path d="M60 597.5H65"/><path d="M62 602.5H65"/><path d="M60 607.5H65"/><path d="M62 612.5H65"/><path d="M60 617.5H65"/><path d="M62 622.5H65"/><path d="M49 627.5H65"/><path d="M62 632.5H65"/><path d="M60 637.5H65"/><path d="M62 642.5H65"/><path d="M60 647.5H65"/><path d="M62 652.5H65"/><path d="M60 657.5H65"/><path d="M62 662.5H65"/><path d="M60 667.5H65"/><path d="M62 672.5H65"/><path d="M49 677.5H65"/><path d="M62 682.5H65"/><path d="M60 687.5H65"/><path d="M62 692.5H65"/><path d="M60 697.5H65"/><path d="M62 702.5H65"/><path d="M60 707.5H65"/><path d="M62 712.5H65"/><path d="M60 717.5H65"/><path d="M62 722.5H65"/><path d="M49 727.5H65"/><path d="M62 732.5H65"/><path d="M60 737.5H65"/><path d="M62 742.5H65"/><path d="M60 747.5H65"/><path d="M62 752.5H65"/><path d="M60 757.5H65"/><path d="M62 762.5H65"/><path d="M60 767.5H65"/><path d="M62 772.5H65"/><path d="M49 777.5H65"/><path d="M62 782.5H65"/><path d="M60 787.5H65"/><path d="M62 792.5H65"/><path d="M60 797.5H65"/><path d="M62 802.5H65"/><path d="M60 807.5H65"/><path d="M62 812.5H65"/><path d="M60 817.5H65"/><path d="M62 822.5H65"/><path d="M49 827.5H65"/><path d="M62 832.5H65"/><path d="M60 837.5H65"/><path d="M62 842.5H65"/><path d="M60 847.5H65"/><path d="M62 852.5H65"/><path d="M60 857.5H65"/><path d="M62 862.5H65"/><path d="M60 867.5H65"/><path d="M62 872.5H65"/><path d="M49 877.5H65"/><path d="M62 882.5H65"/><path d="M60 887.5H65"/><path d="M62 892.5H65"/><path d="M60 897.5H65"/><path d="M62 902.5H65"/><path d="M60 907.5H65"/><path d="M62 912.5H65"/><path d="M60 917.5H65"/><path d="M62 922.5H65"/><path d="M49 927.5H65"/><path d="M62 932.5H65"/><path d="M60 937.5H65"/><path d="M62 942.5H65"/><path d="M60 947.5H65"/><path d="M62 952.5H65"/><path d="M60 957.5H65"/><path d="M62 962.5H65"/><path d="M60 967.5H65"/><path d="M62 972.5H65"/><path d="M49 977.5H65"/><path d="M62 982.5H65"/><path d="M60 987.5H65"/><path d="M62 992.5H65"/><path d="M60 997.5H65"/><path d="M62 1002.5H65"/><path d="M60 1007.5H65"/><path d="M62 1012.5H65"/><path d="M60 1017.5H65"/><path d="M62 1022.5H65"/><path d="M49 1027.5H65"/><path d="M62 1032.5H65"/></g><path d="M65.5 100V1033" stroke="#6e6e6e" stroke-width="1" shape-rendering="crispEdges"/><path d="M50 413.5H58" stroke="#e0e0e0" stroke-width="1"/></svg>
<span class="t" style="left:50.30px;top:99.47px;font-size:10px;color:#a8a8a8;transform:scaleX(0.8809);">0</span>
<span class="t" style="left:50.30px;top:129.47px;font-size:10px;color:#a8a8a8;transform:scaleX(0.8809);">2</span>
<span class="t" style="left:50.30px;top:139.47px;font-size:10px;color:#a8a8a8;transform:scaleX(0.8809);">0</span>
<span class="t" style="left:50.30px;top:149.47px;font-size:10px;color:#a8a8a8;transform:scaleX(0.8809);">0</span>
<span class="t" style="left:50.30px;top:179.47px;font-size:10px;color:#a8a8a8;transform:scaleX(0.8809);">1</span>
<span class="t" style="left:50.30px;top:189.47px;font-size:10px;color:#a8a8a8;transform:scaleX(0.8809);">5</span>
<span class="t" style="left:50.30px;top:199.47px;font-size:10px;color:#a8a8a8;transform:scaleX(0.8809);">0</span>
<span class="t" style="left:50.30px;top:229.47px;font-size:10px;color:#a8a8a8;transform:scaleX(0.8809);">1</span>
<span class="t" style="left:50.30px;top:239.47px;font-size:10px;color:#a8a8a8;transform:scaleX(0.8809);">0</span>
<span class="t" style="left:50.30px;top:249.47px;font-size:10px;color:#a8a8a8;transform:scaleX(0.8809);">0</span>
<span class="t" style="left:50.30px;top:279.48px;font-size:10px;color:#a8a8a8;transform:scaleX(0.8809);">5</span>
<span class="t" style="left:50.30px;top:289.48px;font-size:10px;color:#a8a8a8;transform:scaleX(0.8809);">0</span>
<span class="t" style="left:50.30px;top:329.48px;font-size:10px;color:#a8a8a8;transform:scaleX(0.8809);">0</span>
<span class="t" style="left:50.30px;top:379.48px;font-size:10px;color:#a8a8a8;transform:scaleX(0.8809);">5</span>
<span class="t" style="left:50.30px;top:389.48px;font-size:10px;color:#a8a8a8;transform:scaleX(0.8809);">0</span>
<span class="t" style="left:50.30px;top:429.48px;font-size:10px;color:#a8a8a8;transform:scaleX(0.8809);">1</span>
<span class="t" style="left:50.30px;top:439.48px;font-size:10px;color:#a8a8a8;transform:scaleX(0.8809);">0</span>
<span class="t" style="left:50.30px;top:449.48px;font-size:10px;color:#a8a8a8;transform:scaleX(0.8809);">0</span>
<span class="t" style="left:50.30px;top:479.48px;font-size:10px;color:#a8a8a8;transform:scaleX(0.8809);">1</span>
<span class="t" style="left:50.30px;top:489.48px;font-size:10px;color:#a8a8a8;transform:scaleX(0.8809);">5</span>
<span class="t" style="left:50.30px;top:499.48px;font-size:10px;color:#a8a8a8;transform:scaleX(0.8809);">0</span>
<span class="t" style="left:50.30px;top:529.48px;font-size:10px;color:#a8a8a8;transform:scaleX(0.8809);">2</span>
<span class="t" style="left:50.30px;top:539.48px;font-size:10px;color:#a8a8a8;transform:scaleX(0.8809);">0</span>
<span class="t" style="left:50.30px;top:549.48px;font-size:10px;color:#a8a8a8;transform:scaleX(0.8809);">0</span>
<span class="t" style="left:50.30px;top:579.48px;font-size:10px;color:#a8a8a8;transform:scaleX(0.8809);">2</span>
<span class="t" style="left:50.30px;top:589.48px;font-size:10px;color:#a8a8a8;transform:scaleX(0.8809);">5</span>
<span class="t" style="left:50.30px;top:599.48px;font-size:10px;color:#a8a8a8;transform:scaleX(0.8809);">0</span>
<span class="t" style="left:50.30px;top:629.48px;font-size:10px;color:#a8a8a8;transform:scaleX(0.8809);">3</span>
<span class="t" style="left:50.30px;top:639.48px;font-size:10px;color:#a8a8a8;transform:scaleX(0.8809);">0</span>
<span class="t" style="left:50.30px;top:649.48px;font-size:10px;color:#a8a8a8;transform:scaleX(0.8809);">0</span>
<span class="t" style="left:50.30px;top:679.48px;font-size:10px;color:#a8a8a8;transform:scaleX(0.8809);">3</span>
<span class="t" style="left:50.30px;top:689.48px;font-size:10px;color:#a8a8a8;transform:scaleX(0.8809);">5</span>
<span class="t" style="left:50.30px;top:699.48px;font-size:10px;color:#a8a8a8;transform:scaleX(0.8809);">0</span>
<span class="t" style="left:50.30px;top:729.48px;font-size:10px;color:#a8a8a8;transform:scaleX(0.8809);">4</span>
<span class="t" style="left:50.30px;top:739.48px;font-size:10px;color:#a8a8a8;transform:scaleX(0.8809);">0</span>
<span class="t" style="left:50.30px;top:749.48px;font-size:10px;color:#a8a8a8;transform:scaleX(0.8809);">0</span>
<span class="t" style="left:50.30px;top:779.48px;font-size:10px;color:#a8a8a8;transform:scaleX(0.8809);">4</span>
<span class="t" style="left:50.30px;top:789.48px;font-size:10px;color:#a8a8a8;transform:scaleX(0.8809);">5</span>
<span class="t" style="left:50.30px;top:799.48px;font-size:10px;color:#a8a8a8;transform:scaleX(0.8809);">0</span>
<span class="t" style="left:50.30px;top:829.48px;font-size:10px;color:#a8a8a8;transform:scaleX(0.8809);">5</span>
<span class="t" style="left:50.30px;top:839.48px;font-size:10px;color:#a8a8a8;transform:scaleX(0.8809);">0</span>
<span class="t" style="left:50.30px;top:849.48px;font-size:10px;color:#a8a8a8;transform:scaleX(0.8809);">0</span>
<span class="t" style="left:50.30px;top:879.48px;font-size:10px;color:#a8a8a8;transform:scaleX(0.8809);">5</span>
<span class="t" style="left:50.30px;top:889.48px;font-size:10px;color:#a8a8a8;transform:scaleX(0.8809);">5</span>
<span class="t" style="left:50.30px;top:899.48px;font-size:10px;color:#a8a8a8;transform:scaleX(0.8809);">0</span>
<span class="t" style="left:50.30px;top:929.48px;font-size:10px;color:#a8a8a8;transform:scaleX(0.8809);">6</span>
<span class="t" style="left:50.30px;top:939.48px;font-size:10px;color:#a8a8a8;transform:scaleX(0.8809);">0</span>
<span class="t" style="left:50.30px;top:949.48px;font-size:10px;color:#a8a8a8;transform:scaleX(0.8809);">0</span>
<span class="t" style="left:50.30px;top:979.48px;font-size:10px;color:#a8a8a8;transform:scaleX(0.8809);">6</span>
<span class="t" style="left:50.30px;top:989.48px;font-size:10px;color:#a8a8a8;transform:scaleX(0.8809);">5</span>
<span class="t" style="left:50.30px;top:999.48px;font-size:10px;color:#a8a8a8;transform:scaleX(0.8809);">0</span>
<span class="t" style="left:50.30px;top:1029.47px;font-size:10px;color:#a8a8a8;transform:scaleX(0.8809);">7</span>
<div style="left:486px;top:327px;width:640px;height:480px;background:#ff0029;"></div>
<svg style="left:486px;top:327px;" width="640" height="480" viewBox="486 327 640 480"><defs><filter id="bl" x="-5%" y="-5%" width="110%" height="110%"><feGaussianBlur stdDeviation="1.9"/></filter><filter id="bw" x="-5%" y="-5%" width="110%" height="110%"><feGaussianBlur stdDeviation="3.6"/></filter></defs><g fill="none" stroke="#ffffff" stroke-width="14" stroke-linecap="round" stroke-linejoin="round" filter="url(#bw)" opacity="0.85"><path d="M587.0 384.5 C586.8 389.1 586.3 402.8 586.0 412.0 C585.7 421.2 585.8 428.0 585.0 440.0 C584.2 452.0 582.3 470.3 581.0 484.0 C579.7 497.7 577.7 515.7 577.0 522.0"/><path d="M570.5 427.0 C570.3 431.5 569.4 444.3 569.5 454.0 C569.6 463.7 570.3 473.3 571.0 485.0 C571.7 496.7 573.1 517.5 573.5 524.0"/><path d="M578.0 438.0 C577.8 443.3 577.4 459.7 577.0 470.0 C576.6 480.3 575.8 495.0 575.5 500.0"/><path d="M585.0 443.0 C587.2 444.1 592.3 447.9 598.0 449.5 C603.7 451.1 612.0 452.5 619.0 452.5 C626.0 452.5 633.0 451.2 640.0 449.5 C647.0 447.8 655.5 445.5 661.0 442.0 C666.5 438.5 669.6 434.2 673.0 428.5 C676.4 422.8 679.4 415.8 681.5 408.0 C683.6 400.2 684.8 386.3 685.5 382.0"/><path d="M686.0 383.0 C686.8 386.0 691.7 392.7 691.0 401.0 C690.3 409.3 685.7 424.2 682.0 433.0 C678.3 441.8 671.5 445.3 669.0 454.0 C666.5 462.7 666.7 475.7 667.0 485.0 C667.3 494.3 668.1 501.4 671.0 510.0 C673.9 518.6 682.2 532.1 684.5 536.5"/><path d="M697.0 499.5 C698.9 501.6 703.4 510.7 708.5 512.0 C713.6 513.3 718.2 509.8 727.5 507.5 C736.8 505.2 753.8 501.6 764.5 498.5 C775.2 495.4 785.9 491.8 791.5 489.0 C797.1 486.2 798.7 484.2 798.0 481.5 C797.3 478.8 793.8 474.8 787.5 472.5 C781.2 470.2 769.2 467.3 760.5 468.0 C751.8 468.7 742.4 472.3 735.5 476.5 C728.6 480.7 723.2 486.8 719.0 493.0 C714.8 499.2 711.9 507.4 710.5 514.0 C709.1 520.6 709.1 527.3 710.5 532.5 C711.9 537.7 713.4 542.9 719.0 545.0 C724.6 547.1 732.9 546.4 744.0 545.0 C755.1 543.6 772.8 538.8 785.5 536.5 C798.2 534.2 810.8 532.1 820.0 531.0 C829.2 529.9 837.5 530.2 841.0 530.0"/><path d="M849.0 404.5 C849.3 409.2 851.2 420.9 851.0 432.5 C850.8 444.1 849.2 460.2 848.0 474.0 C846.8 487.8 844.3 505.5 844.0 515.5 C843.7 525.5 841.8 529.7 846.0 534.0 C850.2 538.3 865.2 540.2 869.0 541.5"/><path d="M912.5 412.5 C912.6 419.2 913.2 437.6 913.0 453.0 C912.8 468.4 912.2 489.4 911.5 505.0 C910.8 520.6 909.0 537.3 908.5 546.5 C908.0 555.7 906.2 557.2 908.5 560.0 C910.8 562.8 919.8 562.9 922.0 563.5"/><path d="M1011.5 472.0 C1007.3 472.3 993.5 471.9 986.5 474.0 C979.5 476.1 974.0 479.7 969.5 484.5 C965.0 489.3 961.8 495.8 959.5 503.0 C957.2 510.2 955.3 520.0 956.0 528.0 C956.7 536.0 959.2 544.1 963.5 551.0 C967.8 557.9 974.8 565.3 982.0 569.5 C989.2 573.7 997.6 576.3 1007.0 576.0 C1016.4 575.7 1028.8 572.4 1038.5 567.5 C1048.2 562.6 1058.2 554.5 1065.5 546.5 C1072.8 538.5 1078.8 528.2 1082.0 519.5 C1085.2 510.8 1086.1 503.2 1085.0 494.5 C1083.9 485.8 1080.5 475.4 1075.5 467.5 C1070.5 459.6 1062.9 452.2 1055.0 447.0 C1047.1 441.8 1036.0 438.4 1028.0 436.5 C1020.0 434.6 1013.6 434.1 1007.0 435.5 C1000.4 436.9 993.5 440.7 988.5 445.0 C983.5 449.3 980.0 455.7 977.0 461.5 C974.0 467.3 971.6 476.9 970.5 480.0"/><path d="M556.0 603.5 C556.3 610.1 556.4 632.6 558.0 643.0 C559.6 653.4 562.8 661.5 565.5 666.0 C568.2 670.5 571.2 671.4 574.5 670.0 C577.8 668.6 581.7 662.5 585.0 657.5 C588.3 652.5 591.8 638.9 594.5 640.0 C597.2 641.1 598.4 654.5 601.5 664.0 C604.6 673.5 608.7 688.8 613.0 697.0 C617.3 705.2 621.9 712.2 627.5 713.0 C633.1 713.8 639.2 709.0 646.5 701.5 C653.8 694.0 664.8 678.8 671.5 668.0 C678.2 657.2 684.1 646.3 687.0 637.0 C689.9 627.7 689.8 619.2 689.0 612.0 C688.2 604.8 684.6 598.0 682.0 593.5 C679.4 589.0 674.9 586.4 673.5 585.0"/><path d="M702.0 650.5 C708.0 649.7 725.1 644.3 738.0 645.5 C750.9 646.7 767.1 651.7 779.5 657.5 C791.9 663.3 806.1 673.2 812.5 680.5 C818.9 687.8 820.0 694.9 818.0 701.5 C816.0 708.1 810.4 715.8 800.5 720.0 C790.6 724.2 771.7 727.5 758.5 726.5 C745.3 725.5 731.3 720.2 721.5 714.0 C711.7 707.8 703.8 696.7 699.5 689.0 C695.2 681.3 696.3 673.5 696.0 668.0 C695.7 662.5 696.2 659.1 697.5 656.0 C698.8 652.9 702.9 650.6 704.0 649.5"/><path d="M705.0 662.0 C708.1 664.4 717.0 672.3 723.5 676.5 C730.0 680.7 740.6 685.2 744.0 687.0"/><path d="M694.0 646.0 L700.0 654.0"/><path d="M702.0 655.0 L712.0 652.5"/><path d="M833.0 728.5 C832.9 721.2 832.2 697.3 832.5 684.5 C832.8 671.7 832.3 659.8 834.5 651.5 C836.7 643.2 841.6 635.3 845.5 635.0 C849.4 634.7 853.4 644.3 858.0 649.5 C862.6 654.7 867.1 662.4 873.0 666.0 C878.9 669.6 886.9 671.3 893.5 671.0 C900.1 670.7 907.3 666.6 912.5 664.0 C917.7 661.4 922.5 656.9 924.5 655.5"/><path d="M837.5 727.0 C837.5 720.8 837.4 701.2 837.5 690.0 C837.6 678.8 837.9 665.0 838.0 660.0"/><path d="M925.5 611.0 C925.3 618.1 924.8 639.5 924.5 653.5 C924.2 667.5 923.1 685.2 923.5 695.0 C923.9 704.8 924.0 707.8 927.0 712.0 C930.0 716.2 936.3 718.0 941.5 720.0 C946.7 722.0 952.8 722.9 958.0 724.0 C963.2 725.1 970.1 726.1 972.5 726.5"/><path d="M924.5 650.5 L941.5 650.0"/><path d="M1006.0 678.5 C1002.2 679.5 989.6 680.3 983.0 684.5 C976.4 688.7 969.8 697.6 966.5 703.5 C963.2 709.4 962.0 716.2 963.0 720.0 C964.0 723.8 968.5 726.5 972.5 726.5 C976.5 726.5 981.1 724.2 987.0 720.0 C992.9 715.8 1002.2 708.1 1008.0 701.5 C1013.8 694.9 1018.2 688.5 1021.5 680.5 C1024.8 672.5 1026.6 663.2 1027.5 653.5 C1028.4 643.8 1027.9 632.1 1027.0 622.5 C1026.1 612.9 1022.8 600.4 1022.0 596.0"/><path d="M1023.0 596.5 C1025.2 600.8 1033.6 614.0 1036.0 622.5 C1038.4 631.0 1038.6 637.8 1037.5 647.5 C1036.4 657.2 1030.6 671.5 1029.5 680.5 C1028.4 689.5 1028.8 696.5 1031.0 701.5 C1033.2 706.5 1038.1 708.8 1043.0 710.5 C1047.9 712.2 1057.6 711.8 1060.5 712.0"/></g><g fill="none" stroke="#14ff0c" stroke-width="12.4" stroke-linecap="round" stroke-linejoin="round" filter="url(#bl)"><path d="M587.0 384.5 C586.8 389.1 586.3 402.8 586.0 412.0 C585.7 421.2 585.8 428.0 585.0 440.0 C584.2 452.0 582.3 470.3 581.0 484.0 C579.7 497.7 577.7 515.7 577.0 522.0"/><path d="M570.5 427.0 C570.3 431.5 569.4 444.3 569.5 454.0 C569.6 463.7 570.3 473.3 571.0 485.0 C571.7 496.7 573.1 517.5 573.5 524.0"/><path d="M578.0 438.0 C577.8 443.3 577.4 459.7 577.0 470.0 C576.6 480.3 575.8 495.0 575.5 500.0"/><path d="M585.0 443.0 C587.2 444.1 592.3 447.9 598.0 449.5 C603.7 451.1 612.0 452.5 619.0 452.5 C626.0 452.5 633.0 451.2 640.0 449.5 C647.0 447.8 655.5 445.5 661.0 442.0 C666.5 438.5 669.6 434.2 673.0 428.5 C676.4 422.8 679.4 415.8 681.5 408.0 C683.6 400.2 684.8 386.3 685.5 382.0"/><path d="M686.0 383.0 C686.8 386.0 691.7 392.7 691.0 401.0 C690.3 409.3 685.7 424.2 682.0 433.0 C678.3 441.8 671.5 445.3 669.0 454.0 C666.5 462.7 666.7 475.7 667.0 485.0 C667.3 494.3 668.1 501.4 671.0 510.0 C673.9 518.6 682.2 532.1 684.5 536.5"/><path d="M697.0 499.5 C698.9 501.6 703.4 510.7 708.5 512.0 C713.6 513.3 718.2 509.8 727.5 507.5 C736.8 505.2 753.8 501.6 764.5 498.5 C775.2 495.4 785.9 491.8 791.5 489.0 C797.1 486.2 798.7 484.2 798.0 481.5 C797.3 478.8 793.8 474.8 787.5 472.5 C781.2 470.2 769.2 467.3 760.5 468.0 C751.8 468.7 742.4 472.3 735.5 476.5 C728.6 480.7 723.2 486.8 719.0 493.0 C714.8 499.2 711.9 507.4 710.5 514.0 C709.1 520.6 709.1 527.3 710.5 532.5 C711.9 537.7 713.4 542.9 719.0 545.0 C724.6 547.1 732.9 546.4 744.0 545.0 C755.1 543.6 772.8 538.8 785.5 536.5 C798.2 534.2 810.8 532.1 820.0 531.0 C829.2 529.9 837.5 530.2 841.0 530.0"/><path d="M849.0 404.5 C849.3 409.2 851.2 420.9 851.0 432.5 C850.8 444.1 849.2 460.2 848.0 474.0 C846.8 487.8 844.3 505.5 844.0 515.5 C843.7 525.5 841.8 529.7 846.0 534.0 C850.2 538.3 865.2 540.2 869.0 541.5"/><path d="M912.5 412.5 C912.6 419.2 913.2 437.6 913.0 453.0 C912.8 468.4 912.2 489.4 911.5 505.0 C910.8 520.6 909.0 537.3 908.5 546.5 C908.0 555.7 906.2 557.2 908.5 560.0 C910.8 562.8 919.8 562.9 922.0 563.5"/><path d="M1011.5 472.0 C1007.3 472.3 993.5 471.9 986.5 474.0 C979.5 476.1 974.0 479.7 969.5 484.5 C965.0 489.3 961.8 495.8 959.5 503.0 C957.2 510.2 955.3 520.0 956.0 528.0 C956.7 536.0 959.2 544.1 963.5 551.0 C967.8 557.9 974.8 565.3 982.0 569.5 C989.2 573.7 997.6 576.3 1007.0 576.0 C1016.4 575.7 1028.8 572.4 1038.5 567.5 C1048.2 562.6 1058.2 554.5 1065.5 546.5 C1072.8 538.5 1078.8 528.2 1082.0 519.5 C1085.2 510.8 1086.1 503.2 1085.0 494.5 C1083.9 485.8 1080.5 475.4 1075.5 467.5 C1070.5 459.6 1062.9 452.2 1055.0 447.0 C1047.1 441.8 1036.0 438.4 1028.0 436.5 C1020.0 434.6 1013.6 434.1 1007.0 435.5 C1000.4 436.9 993.5 440.7 988.5 445.0 C983.5 449.3 980.0 455.7 977.0 461.5 C974.0 467.3 971.6 476.9 970.5 480.0"/><path d="M556.0 603.5 C556.3 610.1 556.4 632.6 558.0 643.0 C559.6 653.4 562.8 661.5 565.5 666.0 C568.2 670.5 571.2 671.4 574.5 670.0 C577.8 668.6 581.7 662.5 585.0 657.5 C588.3 652.5 591.8 638.9 594.5 640.0 C597.2 641.1 598.4 654.5 601.5 664.0 C604.6 673.5 608.7 688.8 613.0 697.0 C617.3 705.2 621.9 712.2 627.5 713.0 C633.1 713.8 639.2 709.0 646.5 701.5 C653.8 694.0 664.8 678.8 671.5 668.0 C678.2 657.2 684.1 646.3 687.0 637.0 C689.9 627.7 689.8 619.2 689.0 612.0 C688.2 604.8 684.6 598.0 682.0 593.5 C679.4 589.0 674.9 586.4 673.5 585.0"/><path d="M702.0 650.5 C708.0 649.7 725.1 644.3 738.0 645.5 C750.9 646.7 767.1 651.7 779.5 657.5 C791.9 663.3 806.1 673.2 812.5 680.5 C818.9 687.8 820.0 694.9 818.0 701.5 C816.0 708.1 810.4 715.8 800.5 720.0 C790.6 724.2 771.7 727.5 758.5 726.5 C745.3 725.5 731.3 720.2 721.5 714.0 C711.7 707.8 703.8 696.7 699.5 689.0 C695.2 681.3 696.3 673.5 696.0 668.0 C695.7 662.5 696.2 659.1 697.5 656.0 C698.8 652.9 702.9 650.6 704.0 649.5"/><path d="M705.0 662.0 C708.1 664.4 717.0 672.3 723.5 676.5 C730.0 680.7 740.6 685.2 744.0 687.0"/><path d="M694.0 646.0 L700.0 654.0"/><path d="M702.0 655.0 L712.0 652.5"/><path d="M833.0 728.5 C832.9 721.2 832.2 697.3 832.5 684.5 C832.8 671.7 832.3 659.8 834.5 651.5 C836.7 643.2 841.6 635.3 845.5 635.0 C849.4 634.7 853.4 644.3 858.0 649.5 C862.6 654.7 867.1 662.4 873.0 666.0 C878.9 669.6 886.9 671.3 893.5 671.0 C900.1 670.7 907.3 666.6 912.5 664.0 C917.7 661.4 922.5 656.9 924.5 655.5"/><path d="M837.5 727.0 C837.5 720.8 837.4 701.2 837.5 690.0 C837.6 678.8 837.9 665.0 838.0 660.0"/><path d="M925.5 611.0 C925.3 618.1 924.8 639.5 924.5 653.5 C924.2 667.5 923.1 685.2 923.5 695.0 C923.9 704.8 924.0 707.8 927.0 712.0 C930.0 716.2 936.3 718.0 941.5 720.0 C946.7 722.0 952.8 722.9 958.0 724.0 C963.2 725.1 970.1 726.1 972.5 726.5"/><path d="M924.5 650.5 L941.5 650.0"/><path d="M1006.0 678.5 C1002.2 679.5 989.6 680.3 983.0 684.5 C976.4 688.7 969.8 697.6 966.5 703.5 C963.2 709.4 962.0 716.2 963.0 720.0 C964.0 723.8 968.5 726.5 972.5 726.5 C976.5 726.5 981.1 724.2 987.0 720.0 C992.9 715.8 1002.2 708.1 1008.0 701.5 C1013.8 694.9 1018.2 688.5 1021.5 680.5 C1024.8 672.5 1026.6 663.2 1027.5 653.5 C1028.4 643.8 1027.9 632.1 1027.0 622.5 C1026.1 612.9 1022.8 600.4 1022.0 596.0"/><path d="M1023.0 596.5 C1025.2 600.8 1033.6 614.0 1036.0 622.5 C1038.4 631.0 1038.6 637.8 1037.5 647.5 C1036.4 657.2 1030.6 671.5 1029.5 680.5 C1028.4 689.5 1028.8 696.5 1031.0 701.5 C1033.2 706.5 1038.1 708.8 1043.0 710.5 C1047.9 712.2 1057.6 711.8 1060.5 712.0"/></g></svg>
<div style="left:48px;top:1033px;width:49px;height:16px;background:#454545;"></div>
<div style="left:97px;top:1033px;width:184px;height:16px;background:#535353;"></div>
<span class="t" style="left:60.00px;top:1036.22px;font-size:10.5px;color:#f0f0f0;transform:scaleX(0.9308);">100%</span>
<span class="t" style="left:138.00px;top:1036.22px;font-size:10.5px;color:#d6d6d6;transform:scaleX(0.9257);">Doc: 900.0K/900.0K</span>
<svg style="left:268px;top:1036px;" width="8" height="11" viewBox="0 0 8 11"><path d="M2 1 L6 5.5 L2 10" fill="none" stroke="#cfcfcf" stroke-width="1.2"/></svg>
<svg style="left:1589px;top:65.6px;" width="9" height="6" viewBox="0 0 9 6"><path d="M3.5 0.7 L1 3 L3.5 5.3 M7.4 0.7 L4.9 3 L7.4 5.3" fill="none" stroke="#d0d0d0" stroke-width="1.5"/></svg>
<svg style="left:1913px;top:65.6px;" width="9" height="6" viewBox="0 0 9 6"><path d="M1 0.7 L3.5 3 L1 5.3 M4.9 0.7 L7.4 3 L4.9 5.3" fill="none" stroke="#d0d0d0" stroke-width="1.5"/></svg>
<div style="left:1574px;top:78px;width:1px;height:4px;background:#3f3f3f;"></div>
<div style="left:1576px;top:78px;width:1px;height:4px;background:#3f3f3f;"></div>
<div style="left:1578px;top:78px;width:1px;height:4px;background:#3f3f3f;"></div>
<div style="left:1580px;top:78px;width:1px;height:4px;background:#3f3f3f;"></div>
<div style="left:1582px;top:78px;width:1px;height:4px;background:#3f3f3f;"></div>
<div style="left:1584px;top:78px;width:1px;height:4px;background:#3f3f3f;"></div>
<div style="left:1586px;top:78px;width:1px;height:4px;background:#3f3f3f;"></div>
<div style="left:1588px;top:78px;width:1px;height:4px;background:#3f3f3f;"></div>
<div style="left:1590px;top:78px;width:1px;height:4px;background:#3f3f3f;"></div>
<div style="left:1592px;top:78px;width:1px;height:4px;background:#3f3f3f;"></div>
<div style="left:1565px;top:143px;width:37px;height:1px;background:#383838;"></div>
<div style="left:1574px;top:147px;width:1px;height:4px;background:#3f3f3f;"></div>
<div style="left:1576px;top:147px;width:1px;height:4px;background:#3f3f3f;"></div>
<div style="left:1578px;top:147px;width:1px;height:4px;background:#3f3f3f;"></div>
<div style="left:1580px;top:147px;width:1px;height:4px;background:#3f3f3f;"></div>
<div style="left:1582px;top:147px;width:1px;height:4px;background:#3f3f3f;"></div>
<div style="left:1584px;top:147px;width:1px;height:4px;background:#3f3f3f;"></div>
<div style="left:1586px;top:147px;width:1px;height:4px;background:#3f3f3f;"></div>
<div style="left:1588px;top:147px;width:1px;height:4px;background:#3f3f3f;"></div>
<div style="left:1590px;top:147px;width:1px;height:4px;background:#3f3f3f;"></div>
<div style="left:1592px;top:147px;width:1px;height:4px;background:#3f3f3f;"></div>
<div style="left:1565px;top:212px;width:37px;height:1px;background:#383838;"></div>
<div style="left:1574px;top:216px;width:1px;height:4px;background:#3f3f3f;"></div>
<div style="left:1576px;top:216px;width:1px;height:4px;background:#3f3f3f;"></div>
<div style="left:1578px;top:216px;width:1px;height:4px;background:#3f3f3f;"></div>
<div style="left:1580px;top:216px;width:1px;height:4px;background:#3f3f3f;"></div>
<div style="left:1582px;top:216px;width:1px;height:4px;background:#3f3f3f;"></div>
<div style="left:1584px;top:216px;width:1px;height:4px;background:#3f3f3f;"></div>
<div style="left:1586px;top:216px;width:1px;height:4px;background:#3f3f3f;"></div>
<div style="left:1588px;top:216px;width:1px;height:4px;background:#3f3f3f;"></div>
<div style="left:1590px;top:216px;width:1px;height:4px;background:#3f3f3f;"></div>
<div style="left:1592px;top:216px;width:1px;height:4px;background:#3f3f3f;"></div>
<div style="left:1565px;top:253px;width:37px;height:1px;background:#383838;"></div>
<svg style="left:1572px;top:88px;" width="26" height="22" viewBox="0 0 26 22"><g fill="#d6d6d6"><rect x="2" y="2" width="2" height="2"/><rect x="2" y="5" width="2" height="2"/><rect x="2" y="8" width="2" height="2"/><rect x="5" y="2" width="4" height="1"/><rect x="5" y="5" width="4" height="1"/><rect x="5" y="8" width="4" height="1"/><path d="M21.6 4.6 C22.6 4.2 23.2 5 22.8 5.8 L16.2 12.8 L13.8 10.8 Z"/><path d="M13 11.6 L15.4 13.8 C15.4 16.6 12.6 19 6 18.6 C8.6 17.4 8.4 15.4 9.4 13.4 C10.2 11.8 11.8 11.2 13 11.6 Z"/></g></svg>
<svg style="left:1572px;top:116px;" width="26" height="22" viewBox="0 0 26 22"><g fill="#d6d6d6"><path d="M2.6 4.6 C4 1.6 8 1.8 9.4 3.6 L9.4 6 C8 7.6 4 7.6 2.6 4.6 Z"/><rect x="10.2" y="3.8" width="11.6" height="2"/><rect x="4" y="13.6" width="9.4" height="2"/><path d="M14 14.6 L18.6 10.6 C21.2 10.6 22.4 14.4 21.4 18.6 L18.6 18.6 Z"/></g></svg>
<span class="t" style="left:1578.00px;top:158.61px;font-size:17.5px;color:#dcdcdc;transform:scaleX(1.0439);">A</span>
<div style="left:1591.5px;top:159.5px;width:1px;height:16px;background:#dcdcdc;"></div>
<svg style="left:1577px;top:188px;" width="14" height="16" viewBox="0 0 14 16"><path d="M7.2 1.2 H5.6 A3.4 3.4 0 0 0 5.6 8 H7.2 Z" fill="#d6d6d6"/><path d="M7.2 1.8 H12.4 M7.6 1.2 V15 M11 1.2 V15" stroke="#d6d6d6" stroke-width="1.5" fill="none"/></svg>
<span class="t" style="left:1578px;top:225.5px;font-size:22px;line-height:1;color:#dcdcdc;font-family:'Liberation Serif',serif;font-style:italic;transform:scaleX(1.0)">A</span>
<svg style="left:1575px;top:238.5px;" width="12" height="8" viewBox="0 0 12 8"><path d="M1 6.4 C3 7.4 5.4 5.4 7 1.4" fill="none" stroke="#dcdcdc" stroke-width="1.3"/></svg>
<div style="left:1605px;top:75px;width:323px;height:17px;background:#424242;"></div>
<div style="left:1605px;top:91px;width:323px;height:1px;background:#383838;"></div>
<div style="left:1605px;top:75px;width:41px;height:17px;background:#535353;"></div>
<span class="t" style="left:1612.00px;top:79.73px;font-size:9.3px;color:#f2f2f2;font-weight:bold;transform:scaleX(1.0296);">Color</span>
<div style="left:1705px;top:75px;width:1px;height:16px;background:#383838;"></div>
<span class="t" style="left:1653.00px;top:79.73px;font-size:9.3px;color:#acacac;font-weight:bold;transform:scaleX(1.0026);">Swatches</span>
<div style="left:1911px;top:80px;width:10px;height:1px;background:#c4c4c4;"></div>
<div style="left:1911px;top:82px;width:10px;height:1px;background:#c4c4c4;"></div>
<div style="left:1911px;top:84px;width:10px;height:1px;background:#c4c4c4;"></div>
<div style="left:1911px;top:86px;width:10px;height:1px;background:#c4c4c4;"></div>
<div style="left:1605px;top:413px;width:323px;height:3px;background:#494949;"></div>
<div style="left:1605px;top:413px;width:323px;height:1px;background:#3a3a3a;"></div>
<div style="left:1605px;top:415px;width:323px;height:1px;background:#3a3a3a;"></div>
<div style="left:1624px;top:112px;width:20px;height:20px;background:#ffffff;border:1px solid #000;box-sizing:border-box;"></div>
<div style="left:1613px;top:101px;width:22px;height:22px;background:#ff0029;border:1px solid #fff;outline:1px solid #000;outline-offset:-2px;box-sizing:border-box;"></div>
<div style="left:1613px;top:101px;width:22px;height:22px;background:transparent;border:1px solid #8a8a8a;box-sizing:border-box;"></div>
<div style="left:1614px;top:102px;width:20px;height:20px;background:transparent;border:1px solid #000;box-sizing:border-box;"></div>
<div style="left:1615px;top:103px;width:18px;height:18px;background:#ff0029;border:1px solid #fff;box-sizing:border-box;"></div>
<svg style="left:1612px;top:154px;" width="14" height="14" viewBox="0 0 14 14"><path d="M7 1.2 L13 13 H1 Z" fill="#dcdcdc"/><path d="M7 5 V9.6 M7 10.6 V12" stroke="#535353" stroke-width="1.7"/></svg>
<div style="left:1628px;top:154px;width:14px;height:14px;background:#e8152c;border:1px solid #ececec;outline:1px solid #3a3a3a;outline-offset:0px;box-sizing:border-box;"></div>
<div style="left:1650px;top:99px;width:225px;height:293px;background:transparent;background:linear-gradient(to bottom,rgba(0,0,0,0),#000),linear-gradient(to right,#fff,#ff0029);"></div>
<svg style="left:1866px;top:99px;" width="9" height="10" viewBox="0 0 9 10"><circle cx="9.5" cy="-0.8" r="6.6" fill="none" stroke="#fff" stroke-width="1.1"/></svg>
<div style="left:1892px;top:99px;width:19px;height:293px;background:transparent;background:linear-gradient(to bottom,#f00 0%,#f0f 16.67%,#00f 33.33%,#0ff 50%,#0f0 66.67%,#ff0 83.33%,#f00 100%);"></div>
<svg style="left:1881px;top:94.3px;" width="11" height="11" viewBox="0 0 11 11"><path d="M2.4 1.2 H4 L9.4 5.2 L4 9.2 H2.4 Q1.6 9.2 1.6 8.4 V2 Q1.6 1.2 2.4 1.2 Z" fill="#e6e6e6" stroke="#2a2a2a" stroke-width="1.1" stroke-linejoin="round"/></svg>
<div style="left:1605px;top:416px;width:323px;height:17px;background:#424242;"></div>
<div style="left:1605px;top:432px;width:323px;height:1px;background:#383838;"></div>
<div style="left:1668px;top:416px;width:1px;height:16px;background:#383838;"></div>
<span class="t" style="left:1612.00px;top:420.73px;font-size:9.3px;color:#acacac;font-weight:bold;transform:scaleX(1.0217);">Properties</span>
<div style="left:1668px;top:416px;width:35px;height:17px;background:#535353;"></div>
<span class="t" style="left:1676.00px;top:420.73px;font-size:9.3px;color:#f2f2f2;font-weight:bold;transform:scaleX(1.1146);">Info</span>
<div style="left:1754px;top:416px;width:1px;height:16px;background:#383838;"></div>
<span class="t" style="left:1710.00px;top:420.73px;font-size:9.3px;color:#acacac;font-weight:bold;transform:scaleX(1.0266);">Actions</span>
<div style="left:1829px;top:416px;width:1px;height:16px;background:#383838;"></div>
<span class="t" style="left:1762.00px;top:420.73px;font-size:9.3px;color:#acacac;font-weight:bold;transform:scaleX(1.0300);">Adjustments</span>
<div style="left:1911px;top:421px;width:10px;height:1px;background:#c4c4c4;"></div>
<div style="left:1911px;top:423px;width:10px;height:1px;background:#c4c4c4;"></div>
<div style="left:1911px;top:425px;width:10px;height:1px;background:#c4c4c4;"></div>
<div style="left:1911px;top:427px;width:10px;height:1px;background:#c4c4c4;"></div>
<div style="left:1605px;top:662px;width:323px;height:3px;background:#494949;"></div>
<div style="left:1605px;top:662px;width:323px;height:1px;background:#3a3a3a;"></div>
<div style="left:1605px;top:664px;width:323px;height:1px;background:#3a3a3a;"></div>
<div style="left:1765px;top:436px;width:1px;height:70px;background:#464646;"></div>
<div style="left:1606px;top:508px;width:322px;height:1px;background:#464646;"></div>
<div style="left:1765px;top:511px;width:1px;height:35px;background:#464646;"></div>
<div style="left:1605px;top:546px;width:323px;height:1px;background:#464646;"></div>
<div style="left:1605px;top:574px;width:323px;height:1px;background:#464646;"></div>
<span class="t" style="left:1639.00px;top:447.22px;font-size:10.5px;color:#dddddd;transform:scaleX(0.9877);">R</span>
<div style="left:1652.5px;top:450.90000000000003px;width:1.5px;height:1.4px;background:#cdcdcd;"></div>
<div style="left:1652.5px;top:454.6px;width:1.5px;height:1.4px;background:#cdcdcd;"></div>
<span class="t" style="left:1639.00px;top:459.72px;font-size:10.5px;color:#dddddd;transform:scaleX(0.9178);">G</span>
<div style="left:1652.5px;top:463.40000000000003px;width:1.5px;height:1.4px;background:#cdcdcd;"></div>
<div style="left:1652.5px;top:467.1px;width:1.5px;height:1.4px;background:#cdcdcd;"></div>
<span class="t" style="left:1640.00px;top:471.72px;font-size:10.5px;color:#dddddd;transform:scaleX(0.9265);">B</span>
<div style="left:1652.5px;top:475.40000000000003px;width:1.5px;height:1.4px;background:#cdcdcd;"></div>
<div style="left:1652.5px;top:479.1px;width:1.5px;height:1.4px;background:#cdcdcd;"></div>
<span class="t" style="left:1634.00px;top:495.22px;font-size:10.5px;color:#dddddd;transform:scaleX(1.0031);">8-bit</span>
<span class="t" style="left:1800.00px;top:447.22px;font-size:10.5px;color:#dddddd;transform:scaleX(0.9877);">C</span>
<div style="left:1812.5px;top:450.90000000000003px;width:1.5px;height:1.4px;background:#cdcdcd;"></div>
<div style="left:1812.5px;top:454.6px;width:1.5px;height:1.4px;background:#cdcdcd;"></div>
<span class="t" style="left:1798.00px;top:459.72px;font-size:10.5px;color:#dddddd;transform:scaleX(1.0857);">M</span>
<div style="left:1812.5px;top:463.40000000000003px;width:1.5px;height:1.4px;background:#cdcdcd;"></div>
<div style="left:1812.5px;top:467.1px;width:1.5px;height:1.4px;background:#cdcdcd;"></div>
<span class="t" style="left:1800.00px;top:471.72px;font-size:10.5px;color:#dddddd;transform:scaleX(1.0690);">Y</span>
<div style="left:1812.5px;top:475.40000000000003px;width:1.5px;height:1.4px;background:#cdcdcd;"></div>
<div style="left:1812.5px;top:479.1px;width:1.5px;height:1.4px;background:#cdcdcd;"></div>
<span class="t" style="left:1800.00px;top:483.72px;font-size:10.5px;color:#dddddd;transform:scaleX(1.0690);">K</span>
<div style="left:1812.5px;top:487.40000000000003px;width:1.5px;height:1.4px;background:#cdcdcd;"></div>
<div style="left:1812.5px;top:491.1px;width:1.5px;height:1.4px;background:#cdcdcd;"></div>
<span class="t" style="left:1794.00px;top:495.22px;font-size:10.5px;color:#dddddd;transform:scaleX(1.0031);">8-bit</span>
<span class="t" style="left:1640.00px;top:519.22px;font-size:10.5px;color:#dddddd;transform:scaleX(0.9978);">X</span>
<div style="left:1652.5px;top:522.9px;width:1.5px;height:1.4px;background:#cdcdcd;"></div>
<div style="left:1652.5px;top:526.5999999999999px;width:1.5px;height:1.4px;background:#cdcdcd;"></div>
<span class="t" style="left:1640.00px;top:532.22px;font-size:10.5px;color:#dddddd;transform:scaleX(0.9978);">Y</span>
<div style="left:1652.5px;top:535.9px;width:1.5px;height:1.4px;background:#cdcdcd;"></div>
<div style="left:1652.5px;top:539.5999999999999px;width:1.5px;height:1.4px;background:#cdcdcd;"></div>
<span class="t" style="left:1796.00px;top:519.22px;font-size:10.5px;color:#dddddd;transform:scaleX(1.1087);">W</span>
<div style="left:1812.5px;top:522.9px;width:1.5px;height:1.4px;background:#cdcdcd;"></div>
<div style="left:1812.5px;top:526.5999999999999px;width:1.5px;height:1.4px;background:#cdcdcd;"></div>
<span class="t" style="left:1799.00px;top:532.22px;font-size:10.5px;color:#dddddd;transform:scaleX(0.9877);">H</span>
<div style="left:1812.5px;top:535.9px;width:1.5px;height:1.4px;background:#cdcdcd;"></div>
<div style="left:1812.5px;top:539.5999999999999px;width:1.5px;height:1.4px;background:#cdcdcd;"></div>
<svg style="left:1612px;top:457px;" width="15" height="15" viewBox="0 0 15 15"><path d="M2.2 12.6 L2.8 10.4 L8.2 5 L9.8 6.6 L4.4 12 Z" fill="none" stroke="#d6d6d6" stroke-width="1.1" stroke-linejoin="round"/><path d="M7.6 3.6 L11.2 7.2" stroke="#d6d6d6" stroke-width="1.8"/><path d="M9.4 5.4 L11.6 3.2" stroke="#d6d6d6" stroke-width="2.6" stroke-linecap="round"/><path d="M10.4 12 h3.4 l-1.7 2 Z" fill="#d6d6d6"/></svg>
<svg style="left:1772px;top:457px;" width="15" height="15" viewBox="0 0 15 15"><path d="M2.2 12.6 L2.8 10.4 L8.2 5 L9.8 6.6 L4.4 12 Z" fill="none" stroke="#d6d6d6" stroke-width="1.1" stroke-linejoin="round"/><path d="M7.6 3.6 L11.2 7.2" stroke="#d6d6d6" stroke-width="1.8"/><path d="M9.4 5.4 L11.6 3.2" stroke="#d6d6d6" stroke-width="2.6" stroke-linecap="round"/><path d="M10.4 12 h3.4 l-1.7 2 Z" fill="#d6d6d6"/></svg>
<svg style="left:1611px;top:522px;" width="16" height="16" viewBox="0 0 16 16"><path d="M7 1 V14 M0.6 7.5 H13.6" stroke="#d6d6d6" stroke-width="1.2"/><path d="M11 12.4 h3.6 l-1.8 2.2 Z" fill="#d6d6d6"/></svg>
<svg style="left:1771px;top:522px;" width="16" height="16" viewBox="0 0 16 16"><path d="M3.6 3.6 H11 M3.6 3.6 V12" stroke="#d6d6d6" stroke-width="1.2" fill="none"/><path d="M4.6 13.4 H13.4 V5" stroke="#d6d6d6" stroke-width="1.1" stroke-dasharray="1 1" fill="none"/><path d="M11 1.6 L13.6 3.6 L11 5.6 Z M1.6 11.6 L3.6 14.4 L5.6 11.6 Z" fill="#d6d6d6"/></svg>
<span class="t" style="left:1616.00px;top:557.72px;font-size:10.5px;color:#e6e6e6;transform:scaleX(0.9150);">Doc: 900.0K/900.0K</span>
<span class="t" style="left:1616.50px;top:585.72px;font-size:10.5px;color:#dadada;transform:scaleX(0.9505);">Click on desired image area to fill with foreground color.  Use</span>
<span class="t" style="left:1616.50px;top:597.52px;font-size:10.5px;color:#dadada;transform:scaleX(0.9521);">Shift, Alt and Ctrl for additional options</span>
<div style="left:1605px;top:665px;width:323px;height:17px;background:#424242;"></div>
<div style="left:1605px;top:681px;width:323px;height:1px;background:#383838;"></div>
<div style="left:1605px;top:665px;width:44px;height:17px;background:#535353;"></div>
<span class="t" style="left:1612.00px;top:669.73px;font-size:9.3px;color:#f2f2f2;font-weight:bold;transform:scaleX(0.9338);">Layers</span>
<div style="left:1706px;top:665px;width:1px;height:16px;background:#383838;"></div>
<span class="t" style="left:1656.00px;top:669.73px;font-size:9.3px;color:#acacac;font-weight:bold;transform:scaleX(0.9795);">Channels</span>
<div style="left:1748px;top:665px;width:1px;height:16px;background:#383838;"></div>
<span class="t" style="left:1714.00px;top:669.73px;font-size:9.3px;color:#acacac;font-weight:bold;transform:scaleX(0.9870);">Paths</span>
<div style="left:1799px;top:665px;width:1px;height:16px;background:#383838;"></div>
<span class="t" style="left:1756.00px;top:669.73px;font-size:9.3px;color:#acacac;font-weight:bold;transform:scaleX(1.0771);">History</span>
<div style="left:1911px;top:670px;width:10px;height:1px;background:#c4c4c4;"></div>
<div style="left:1911px;top:672px;width:10px;height:1px;background:#c4c4c4;"></div>
<div style="left:1911px;top:674px;width:10px;height:1px;background:#c4c4c4;"></div>
<div style="left:1911px;top:676px;width:10px;height:1px;background:#c4c4c4;"></div>
<div style="left:1608px;top:690px;width:88px;height:21px;background:#454545;border:1px solid #666;border-radius:3px;box-sizing:border-box;"></div>
<svg style="left:1616px;top:694px;" width="12" height="13" viewBox="0 0 12 13"><circle cx="5" cy="5" r="3.6" fill="none" stroke="#e6e6e6" stroke-width="1.5"/><path d="M7.6 7.8 L10.6 11.6" stroke="#e6e6e6" stroke-width="2"/></svg>
<span class="t" style="left:1631.00px;top:695.22px;font-size:10.5px;color:#f0f0f0;transform:scaleX(0.9041);">Kind</span>
<svg style="left:1684.0px;top:698.75px;" width="8" height="5.5" viewBox="0 0 8 5.5"><path d="M1 1 L4.0 4.5 L7 1" fill="none" stroke="#c4c4c4" stroke-width="1.05"/></svg>
<svg style="left:1706px;top:693px;" width="14" height="14" viewBox="0 0 14 14"><rect x="1.5" y="2.5" width="11" height="9" fill="none" stroke="#d6d6d6" stroke-width="1.2"/><path d="M3 10 L5.6 6 L7.4 8.4 L9 7 L11 10 Z" fill="#d6d6d6"/></svg>
<svg style="left:1730px;top:693px;" width="14" height="14" viewBox="0 0 14 14"><circle cx="7" cy="7.4" r="5" fill="none" stroke="#d6d6d6" stroke-width="1.3"/><path d="M3.5 10.9 A5 5 0 0 0 10.5 3.9 Z" fill="#d6d6d6"/></svg>
<span class="t" style="left:1756.5px;top:692.5px;font-size:15px;color:#dcdcdc;font-weight:bold;font-family:'Liberation Serif',serif;transform:scaleX(0.95)">T</span>
<svg style="left:1778px;top:693px;" width="15" height="15" viewBox="0 0 15 15"><rect x="3" y="3" width="9" height="9" fill="none" stroke="#d6d6d6" stroke-width="1.2"/><g fill="#535353" stroke="#d6d6d6" stroke-width="1"><rect x="1.5" y="1.5" width="3" height="3"/><rect x="10.5" y="1.5" width="3" height="3"/><rect x="1.5" y="10.5" width="3" height="3"/><rect x="10.5" y="10.5" width="3" height="3"/></g></svg>
<svg style="left:1802px;top:692px;" width="16" height="16" viewBox="0 0 16 16"><path d="M5 7 V2 H10 L13 5 V14 H9" fill="none" stroke="#d6d6d6" stroke-width="1.2"/><path d="M10 2 V5 H13" fill="none" stroke="#d6d6d6" stroke-width="1"/><rect x="3" y="8.4" width="6" height="6" fill="#d6d6d6"/></svg>
<div style="left:1827px;top:692px;width:10px;height:18px;background:#4d4d4d;border:1px solid #454545;border-radius:5px;box-sizing:border-box;"></div>
<div style="left:1828px;top:691px;width:8px;height:8px;background:#d8d8d8;border-radius:4px;"></div>
<div style="left:1605px;top:713px;width:323px;height:1px;background:#484848;"></div>
<div style="left:1608px;top:718px;width:129px;height:21px;background:#454545;border:1px solid #666;border-radius:3px;box-sizing:border-box;"></div>
<span class="t" style="left:1617.00px;top:723.22px;font-size:10.5px;color:#f0f0f0;transform:scaleX(0.9160);">Normal</span>
<svg style="left:1726.0px;top:726.75px;" width="8" height="5.5" viewBox="0 0 8 5.5"><path d="M1 1 L4.0 4.5 L7 1" fill="none" stroke="#c4c4c4" stroke-width="1.05"/></svg>
<span class="t" style="left:1744.00px;top:723.22px;font-size:10.5px;color:#dcdcdc;transform:scaleX(0.9347);">Opacity:</span>
<div style="left:1784px;top:720px;width:52px;height:17px;background:#454545;border:1px solid #666;border-radius:3px;box-sizing:border-box;"></div>
<div style="left:1820px;top:721px;width:1px;height:15px;background:#666;"></div>
<span class="t" style="left:1790.50px;top:723.22px;font-size:10.5px;color:#f0f0f0;transform:scaleX(0.8935);">100%</span>
<svg style="left:1824.0px;top:726.55px;" width="8" height="5.5" viewBox="0 0 8 5.5"><path d="M1 1 L4.0 4.5 L7 1" fill="none" stroke="#c4c4c4" stroke-width="1.05"/></svg>
<div style="left:1605px;top:741px;width:323px;height:1px;background:#484848;"></div>
<span class="t" style="left:1611.00px;top:751.22px;font-size:10.5px;color:#dcdcdc;transform:scaleX(0.9160);">Lock:</span>
<svg style="left:1644px;top:750px;" width="12" height="12" viewBox="0 0 12 12"><rect x="0.5" y="0.5" width="11" height="11" fill="none" stroke="#d6d6d6" stroke-width="1"/><g fill="#d6d6d6"><rect x="1" y="1" width="3.4" height="3.4"/><rect x="7.6" y="1" width="3.4" height="3.4"/><rect x="4.4" y="4.4" width="3.2" height="3.2"/><rect x="1" y="7.6" width="3.4" height="3.4"/><rect x="7.6" y="7.6" width="3.4" height="3.4"/></g></svg>
<svg style="left:1664px;top:749px;" width="15" height="15" viewBox="0 0 15 15"><path d="M13 1.2 C13.8 1 14.2 1.6 13.8 2.2 L8.4 9.4 L6.6 8 Z" fill="#d6d6d6"/><path d="M6 8.6 L7.8 10 C7.6 12.4 5 14 1 13.4 C3.2 12.4 3 11.2 3.6 9.8 C4.2 8.6 5.2 8.2 6 8.6 Z" fill="#d6d6d6"/></svg>
<svg style="left:1686px;top:749px;" width="15" height="15" viewBox="0 0 15 15"><path d="M7.5 2.5 V12.5 M2.5 7.5 H12.5" stroke="#d6d6d6" stroke-width="1.2"/><path d="M7.5 0.6 L9.8 3.4 H5.2 Z M7.5 14.4 L9.8 11.6 H5.2 Z M0.6 7.5 L3.4 5.2 V9.8 Z M14.4 7.5 L11.6 5.2 V9.8 Z" fill="#d6d6d6"/></svg>
<svg style="left:1708px;top:749px;" width="16" height="16" viewBox="0 0 16 16"><path d="M3.6 1 V12.4 H15 M1 3.6 H12.4 V15" fill="none" stroke="#d6d6d6" stroke-width="1.2"/><path d="M5.6 1.4 H14.6 V10.4" fill="none" stroke="#d6d6d6" stroke-width="1" stroke-dasharray="1.2 1.2"/></svg>
<svg style="left:1731px;top:748px;" width="14" height="16" viewBox="0 0 14 16"><rect x="1.6" y="7" width="10.8" height="7.6" rx="0.8" fill="#d6d6d6"/><path d="M4 7 V4.8 A3 3 0 0 1 10 4.8 V7" fill="none" stroke="#d6d6d6" stroke-width="1.6"/><circle cx="7" cy="10.6" r="1.2" fill="#535353"/></svg>
<span class="t" style="left:1766.00px;top:751.22px;font-size:10.5px;color:#dcdcdc;transform:scaleX(0.8566);">Fill:</span>
<div style="left:1784px;top:748px;width:52px;height:17px;background:#454545;border:1px solid #666;border-radius:3px;box-sizing:border-box;"></div>
<div style="left:1820px;top:749px;width:1px;height:15px;background:#666;"></div>
<span class="t" style="left:1790.50px;top:751.22px;font-size:10.5px;color:#f0f0f0;transform:scaleX(0.8935);">100%</span>
<svg style="left:1824.0px;top:754.55px;" width="8" height="5.5" viewBox="0 0 8 5.5"><path d="M1 1 L4.0 4.5 L7 1" fill="none" stroke="#c4c4c4" stroke-width="1.05"/></svg>
<div style="left:1605px;top:771px;width:323px;height:253px;background:#4d4d4d;"></div>
<div style="left:1911px;top:771px;width:17px;height:253px;background:#4a4a4a;"></div>
<div style="left:1605px;top:772px;width:306px;height:33px;background:#535353;"></div>
<div style="left:1605px;top:805px;width:306px;height:1px;background:#404040;"></div>
<div style="left:1605px;top:806px;width:30px;height:33px;background:#535353;"></div>
<div style="left:1635px;top:806px;width:276px;height:33px;background:#6b6b6b;"></div>
<div style="left:1605px;top:839px;width:306px;height:1px;background:#404040;"></div>
<div style="left:1634px;top:772px;width:1px;height:67px;background:#404040;"></div>
<svg style="left:1613.5px;top:784.5px;" width="14" height="10" viewBox="0 0 14 10"><path d="M0.4 5 C3 -0.6 11 -0.6 13.6 5 C11 10.6 3 10.6 0.4 5 Z" fill="#e2e2e2"/><circle cx="7" cy="4.9" r="3.1" fill="#4a4a4a"/><circle cx="8" cy="3.8" r="0.9" fill="#e2e2e2"/></svg>
<svg style="left:1613.5px;top:818.5px;" width="14" height="10" viewBox="0 0 14 10"><path d="M0.4 5 C3 -0.6 11 -0.6 13.6 5 C11 10.6 3 10.6 0.4 5 Z" fill="#e2e2e2"/><circle cx="7" cy="4.9" r="3.1" fill="#4a4a4a"/><circle cx="8" cy="3.8" r="0.9" fill="#e2e2e2"/></svg>
<svg style="left:1639px;top:776px;" width="32" height="25" viewBox="0 0 32 25"><rect x="0" y="0" width="32" height="25" rx="1" fill="#262626"/><g transform="translate(1 1)"><rect width="30" height="23" fill="#fff"/><svg x="0" y="0" width="30" height="23" viewBox="0 0 30 23"><rect x="4" y="0" width="4" height="4" fill="#cfcfcf"/><rect x="12" y="0" width="4" height="4" fill="#cfcfcf"/><rect x="20" y="0" width="4" height="4" fill="#cfcfcf"/><rect x="28" y="0" width="4" height="4" fill="#cfcfcf"/><rect x="0" y="4" width="4" height="4" fill="#cfcfcf"/><rect x="8" y="4" width="4" height="4" fill="#cfcfcf"/><rect x="16" y="4" width="4" height="4" fill="#cfcfcf"/><rect x="24" y="4" width="4" height="4" fill="#cfcfcf"/><rect x="4" y="8" width="4" height="4" fill="#cfcfcf"/><rect x="12" y="8" width="4" height="4" fill="#cfcfcf"/><rect x="20" y="8" width="4" height="4" fill="#cfcfcf"/><rect x="28" y="8" width="4" height="4" fill="#cfcfcf"/><rect x="0" y="12" width="4" height="4" fill="#cfcfcf"/><rect x="8" y="12" width="4" height="4" fill="#cfcfcf"/><rect x="16" y="12" width="4" height="4" fill="#cfcfcf"/><rect x="24" y="12" width="4" height="4" fill="#cfcfcf"/><rect x="4" y="16" width="4" height="4" fill="#cfcfcf"/><rect x="12" y="16" width="4" height="4" fill="#cfcfcf"/><rect x="20" y="16" width="4" height="4" fill="#cfcfcf"/><rect x="28" y="16" width="4" height="4" fill="#cfcfcf"/><rect x="0" y="20" width="4" height="4" fill="#cfcfcf"/><rect x="8" y="20" width="4" height="4" fill="#cfcfcf"/><rect x="16" y="20" width="4" height="4" fill="#cfcfcf"/><rect x="24" y="20" width="4" height="4" fill="#cfcfcf"/></svg><svg x="0" y="0" width="30" height="23" viewBox="486 327 640 480" preserveAspectRatio="none"><g fill="none" stroke="#10e810" stroke-width="11" stroke-linecap="round"><path d="M587.0 384.5 C586.8 389.1 586.3 402.8 586.0 412.0 C585.7 421.2 585.8 428.0 585.0 440.0 C584.2 452.0 582.3 470.3 581.0 484.0 C579.7 497.7 577.7 515.7 577.0 522.0"/><path d="M570.5 427.0 C570.3 431.5 569.4 444.3 569.5 454.0 C569.6 463.7 570.3 473.3 571.0 485.0 C571.7 496.7 573.1 517.5 573.5 524.0"/><path d="M578.0 438.0 C577.8 443.3 577.4 459.7 577.0 470.0 C576.6 480.3 575.8 495.0 575.5 500.0"/><path d="M585.0 443.0 C587.2 444.1 592.3 447.9 598.0 449.5 C603.7 451.1 612.0 452.5 619.0 452.5 C626.0 452.5 633.0 451.2 640.0 449.5 C647.0 447.8 655.5 445.5 661.0 442.0 C666.5 438.5 669.6 434.2 673.0 428.5 C676.4 422.8 679.4 415.8 681.5 408.0 C683.6 400.2 684.8 386.3 685.5 382.0"/><path d="M686.0 383.0 C686.8 386.0 691.7 392.7 691.0 401.0 C690.3 409.3 685.7 424.2 682.0 433.0 C678.3 441.8 671.5 445.3 669.0 454.0 C666.5 462.7 666.7 475.7 667.0 485.0 C667.3 494.3 668.1 501.4 671.0 510.0 C673.9 518.6 682.2 532.1 684.5 536.5"/><path d="M697.0 499.5 C698.9 501.6 703.4 510.7 708.5 512.0 C713.6 513.3 718.2 509.8 727.5 507.5 C736.8 505.2 753.8 501.6 764.5 498.5 C775.2 495.4 785.9 491.8 791.5 489.0 C797.1 486.2 798.7 484.2 798.0 481.5 C797.3 478.8 793.8 474.8 787.5 472.5 C781.2 470.2 769.2 467.3 760.5 468.0 C751.8 468.7 742.4 472.3 735.5 476.5 C728.6 480.7 723.2 486.8 719.0 493.0 C714.8 499.2 711.9 507.4 710.5 514.0 C709.1 520.6 709.1 527.3 710.5 532.5 C711.9 537.7 713.4 542.9 719.0 545.0 C724.6 547.1 732.9 546.4 744.0 545.0 C755.1 543.6 772.8 538.8 785.5 536.5 C798.2 534.2 810.8 532.1 820.0 531.0 C829.2 529.9 837.5 530.2 841.0 530.0"/><path d="M849.0 404.5 C849.3 409.2 851.2 420.9 851.0 432.5 C850.8 444.1 849.2 460.2 848.0 474.0 C846.8 487.8 844.3 505.5 844.0 515.5 C843.7 525.5 841.8 529.7 846.0 534.0 C850.2 538.3 865.2 540.2 869.0 541.5"/><path d="M912.5 412.5 C912.6 419.2 913.2 437.6 913.0 453.0 C912.8 468.4 912.2 489.4 911.5 505.0 C910.8 520.6 909.0 537.3 908.5 546.5 C908.0 555.7 906.2 557.2 908.5 560.0 C910.8 562.8 919.8 562.9 922.0 563.5"/><path d="M1011.5 472.0 C1007.3 472.3 993.5 471.9 986.5 474.0 C979.5 476.1 974.0 479.7 969.5 484.5 C965.0 489.3 961.8 495.8 959.5 503.0 C957.2 510.2 955.3 520.0 956.0 528.0 C956.7 536.0 959.2 544.1 963.5 551.0 C967.8 557.9 974.8 565.3 982.0 569.5 C989.2 573.7 997.6 576.3 1007.0 576.0 C1016.4 575.7 1028.8 572.4 1038.5 567.5 C1048.2 562.6 1058.2 554.5 1065.5 546.5 C1072.8 538.5 1078.8 528.2 1082.0 519.5 C1085.2 510.8 1086.1 503.2 1085.0 494.5 C1083.9 485.8 1080.5 475.4 1075.5 467.5 C1070.5 459.6 1062.9 452.2 1055.0 447.0 C1047.1 441.8 1036.0 438.4 1028.0 436.5 C1020.0 434.6 1013.6 434.1 1007.0 435.5 C1000.4 436.9 993.5 440.7 988.5 445.0 C983.5 449.3 980.0 455.7 977.0 461.5 C974.0 467.3 971.6 476.9 970.5 480.0"/><path d="M556.0 603.5 C556.3 610.1 556.4 632.6 558.0 643.0 C559.6 653.4 562.8 661.5 565.5 666.0 C568.2 670.5 571.2 671.4 574.5 670.0 C577.8 668.6 581.7 662.5 585.0 657.5 C588.3 652.5 591.8 638.9 594.5 640.0 C597.2 641.1 598.4 654.5 601.5 664.0 C604.6 673.5 608.7 688.8 613.0 697.0 C617.3 705.2 621.9 712.2 627.5 713.0 C633.1 713.8 639.2 709.0 646.5 701.5 C653.8 694.0 664.8 678.8 671.5 668.0 C678.2 657.2 684.1 646.3 687.0 637.0 C689.9 627.7 689.8 619.2 689.0 612.0 C688.2 604.8 684.6 598.0 682.0 593.5 C679.4 589.0 674.9 586.4 673.5 585.0"/><path d="M702.0 650.5 C708.0 649.7 725.1 644.3 738.0 645.5 C750.9 646.7 767.1 651.7 779.5 657.5 C791.9 663.3 806.1 673.2 812.5 680.5 C818.9 687.8 820.0 694.9 818.0 701.5 C816.0 708.1 810.4 715.8 800.5 720.0 C790.6 724.2 771.7 727.5 758.5 726.5 C745.3 725.5 731.3 720.2 721.5 714.0 C711.7 707.8 703.8 696.7 699.5 689.0 C695.2 681.3 696.3 673.5 696.0 668.0 C695.7 662.5 696.2 659.1 697.5 656.0 C698.8 652.9 702.9 650.6 704.0 649.5"/><path d="M705.0 662.0 C708.1 664.4 717.0 672.3 723.5 676.5 C730.0 680.7 740.6 685.2 744.0 687.0"/><path d="M694.0 646.0 L700.0 654.0"/><path d="M702.0 655.0 L712.0 652.5"/><path d="M833.0 728.5 C832.9 721.2 832.2 697.3 832.5 684.5 C832.8 671.7 832.3 659.8 834.5 651.5 C836.7 643.2 841.6 635.3 845.5 635.0 C849.4 634.7 853.4 644.3 858.0 649.5 C862.6 654.7 867.1 662.4 873.0 666.0 C878.9 669.6 886.9 671.3 893.5 671.0 C900.1 670.7 907.3 666.6 912.5 664.0 C917.7 661.4 922.5 656.9 924.5 655.5"/><path d="M837.5 727.0 C837.5 720.8 837.4 701.2 837.5 690.0 C837.6 678.8 837.9 665.0 838.0 660.0"/><path d="M925.5 611.0 C925.3 618.1 924.8 639.5 924.5 653.5 C924.2 667.5 923.1 685.2 923.5 695.0 C923.9 704.8 924.0 707.8 927.0 712.0 C930.0 716.2 936.3 718.0 941.5 720.0 C946.7 722.0 952.8 722.9 958.0 724.0 C963.2 725.1 970.1 726.1 972.5 726.5"/><path d="M924.5 650.5 L941.5 650.0"/><path d="M1006.0 678.5 C1002.2 679.5 989.6 680.3 983.0 684.5 C976.4 688.7 969.8 697.6 966.5 703.5 C963.2 709.4 962.0 716.2 963.0 720.0 C964.0 723.8 968.5 726.5 972.5 726.5 C976.5 726.5 981.1 724.2 987.0 720.0 C992.9 715.8 1002.2 708.1 1008.0 701.5 C1013.8 694.9 1018.2 688.5 1021.5 680.5 C1024.8 672.5 1026.6 663.2 1027.5 653.5 C1028.4 643.8 1027.9 632.1 1027.0 622.5 C1026.1 612.9 1022.8 600.4 1022.0 596.0"/><path d="M1023.0 596.5 C1025.2 600.8 1033.6 614.0 1036.0 622.5 C1038.4 631.0 1038.6 637.8 1037.5 647.5 C1036.4 657.2 1030.6 671.5 1029.5 680.5 C1028.4 689.5 1028.8 696.5 1031.0 701.5 C1033.2 706.5 1038.1 708.8 1043.0 710.5 C1047.9 712.2 1057.6 711.8 1060.5 712.0"/></g></svg></g></svg>
<span class="t" style="left:1680.00px;top:784.77px;font-size:10px;color:#e8e8e8;transform:scaleX(0.9593);">Layer 1</span>
<div style="left:1639px;top:810.5px;width:32px;height:24.5px;background:#ff0029;border:1px solid #262e2e;box-sizing:border-box;"></div>
<svg style="left:1637px;top:808px;" width="36" height="29" viewBox="0 0 36 29"><path d="M0.5 9 V0.5 H11 M25 0.5 H35.5 V9 M35.5 20 V28.5 H25 M11 28.5 H0.5 V20" fill="none" stroke="#fff" stroke-width="1"/></svg>
<span class="t" style="left:1680.00px;top:818.77px;font-size:10px;color:#f0f0f0;transform:scaleX(0.9593);">Layer 2</span>
<div style="left:1605px;top:1024px;width:323px;height:1px;background:#404040;"></div>
<svg style="left:1724px;top:1031.5px;" width="16" height="10" viewBox="0 0 16 10"><rect x="1" y="2" width="7.6" height="6" rx="3" fill="none" stroke="#8c8c8c" stroke-width="1.4"/><rect x="7.4" y="2" width="7.6" height="6" rx="3" fill="none" stroke="#8c8c8c" stroke-width="1.4"/><path d="M5 5 H11" stroke="#8c8c8c" stroke-width="1.4"/></svg>
<span class="t" style="left:1753.5px;top:1029px;font-size:14px;color:#dcdcdc;font-style:italic;letter-spacing:-0.4px;transform:scaleX(1.02)">fx</span>
<svg style="left:1763px;top:1041px;" width="6" height="4" viewBox="0 0 6 4"><path d="M0.4 0.4 H4.6 L2.5 3 Z" fill="#d6d6d6"/></svg>
<svg style="left:1778px;top:1029.5px;" width="14" height="12" viewBox="0 0 14 12"><rect x="0.5" y="0.5" width="13" height="10.6" fill="#d6d6d6"/><circle cx="7" cy="5.8" r="3" fill="#535353"/></svg>
<svg style="left:1806px;top:1029.5px;" width="15" height="15" viewBox="0 0 15 15"><circle cx="6.6" cy="6.6" r="5" fill="none" stroke="#d6d6d6" stroke-width="1.3"/><path d="M3.1 10.1 A5 5 0 0 0 10.1 3.1 Z" fill="#d6d6d6"/><path d="M10.4 12 h3.6 l-1.8 2 Z" fill="#d6d6d6"/></svg>
<svg style="left:1833px;top:1029.5px;" width="14" height="12" viewBox="0 0 14 12"><path d="M0.6 0.8 H5.6 L6.8 2.4 H13 V11 H0.6 Z" fill="#d6d6d6"/></svg>
<svg style="left:1860px;top:1030.5px;" width="14" height="13" viewBox="0 0 14 13"><path d="M1.4 1.2 H11.4 V11.4 H5 L1.4 7.8 Z" fill="#3c3c3c" stroke="#d6d6d6" stroke-width="1.3"/><path d="M1.4 7.8 H5 V11.4 Z" fill="#d6d6d6"/></svg>
<svg style="left:1887px;top:1029.5px;" width="13" height="15" viewBox="0 0 13 15"><path d="M1 3 H12 M4.4 3 V1.2 H8.6 V3" fill="none" stroke="#d6d6d6" stroke-width="1.3"/><path d="M2.4 4.4 V13.6 H10.6 V4.4" fill="none" stroke="#d6d6d6" stroke-width="1.3"/><path d="M4.8 5.4 V12 M6.5 5.4 V12 M8.2 5.4 V12" stroke="#d6d6d6" stroke-width="0.9"/></svg>
</div></body></html>
